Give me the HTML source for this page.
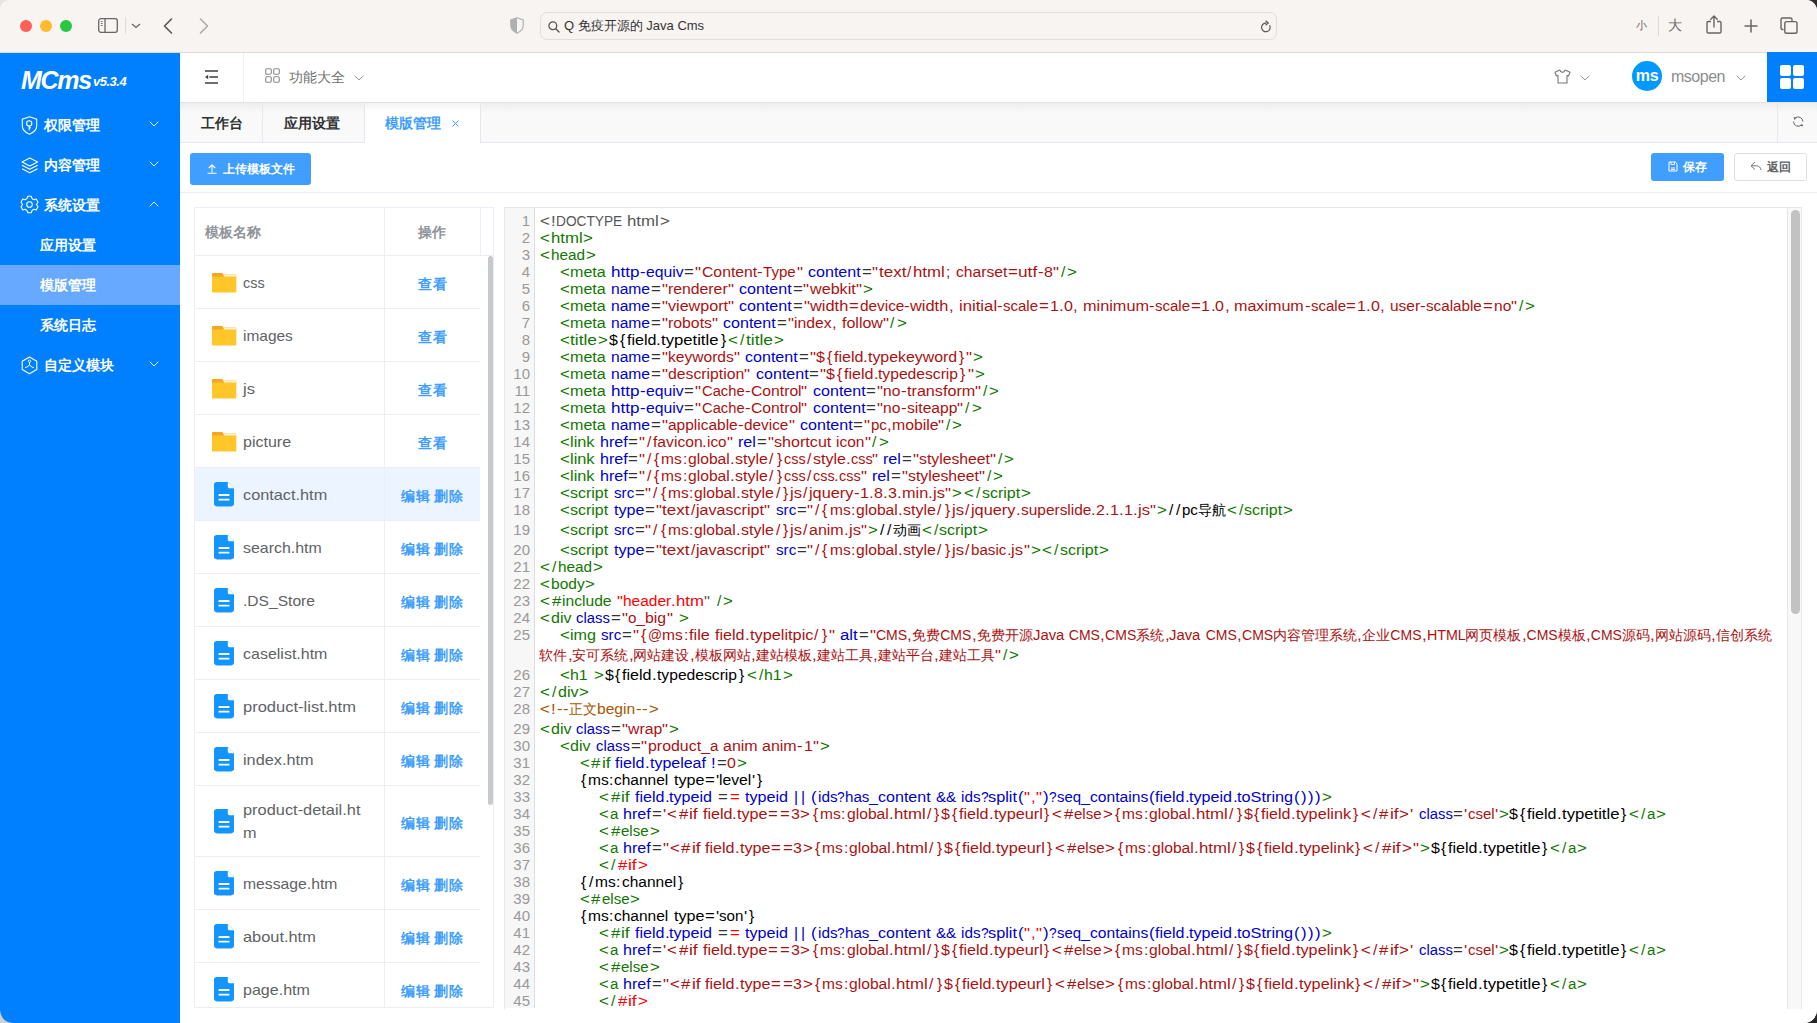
<!DOCTYPE html>
<html><head><meta charset="utf-8">
<style>
*{box-sizing:border-box;margin:0;padding:0}
html,body{width:1817px;height:1023px;overflow:hidden;background:#fff;font-family:"Liberation Sans",sans-serif}
.abs{position:absolute}
svg{position:absolute;overflow:visible}
#win{position:absolute;left:0;top:0;width:1817px;height:1023px;background:#fff;border-radius:10px 11px 13px 13px;overflow:hidden}
#chrome{position:absolute;left:0;top:0;width:1817px;height:53px;background:#f8f4f2;border-bottom:1px solid #dedad8}
.tl{position:absolute;top:20px;width:12px;height:12px;border-radius:50%}
#url{position:absolute;left:540px;top:12px;width:737px;height:28px;border:1px solid #e2dedc;border-radius:7px;background:#f8f4f2}
#side{position:absolute;left:0;top:53px;width:180px;height:970px;background:#007fff}
.mi{position:absolute;left:0;width:180px;height:40px;color:#fff;font-size:14px;font-weight:bold}
.mi .t{position:absolute;left:44px;top:11px;line-height:18px}
.mi.sub .t{left:40px}
#hdr{position:absolute;left:180px;top:53px;width:1637px;height:49px;background:#fff}
#tabs{position:absolute;left:180px;top:102px;width:1637px;height:41px;background:linear-gradient(#eeeeee,#f9f9f9 10px);border-top:1px solid #dfe2e8;border-bottom:1px solid #e4e7ed}
.tab{position:absolute;top:0;height:39px;font-size:14px;font-weight:bold;color:#303133;line-height:41px;border-right:1px solid #e4e7ed}
#main{position:absolute;left:180px;top:143px;width:1637px;height:880px;background:#fff}
.btn{position:absolute;border-radius:3px;font-size:12px;font-weight:bold}
#tbl{position:absolute;left:194px;top:207px;width:300px;height:801px;border:1px solid #ebeef5;overflow:hidden;background:#fff}
.tr{position:absolute;left:0;width:285px;border-bottom:1px solid #ebeef5}
.tr .cd{position:absolute;left:189px;top:0;bottom:0;border-left:1px solid #ebeef5}
.fn{position:absolute;left:48px;font-size:15px;color:#606266;line-height:23px}
.op{position:absolute;left:206px;font-size:13.5px;font-weight:bold;color:#409eff;line-height:18px;letter-spacing:0.5px}
#ed{position:absolute;left:504px;top:207px;width:1298px;height:802px;border:1px solid #e8e8e8;border-bottom:none;overflow:hidden;background:#fff}
#gut{position:absolute;left:0;top:0;width:30px;height:800px;background:#f7f7f7;border-right:1px solid #ddd}
.cl{position:absolute;left:0;height:17px;width:1290px;font-size:14px;line-height:17px;white-space:pre}
.cl .ln{position:absolute;left:0;top:-1.2px;width:25px;text-align:right;color:#999;font-size:15px}
.cl i{position:absolute;top:0;font-style:normal;transform-origin:0 0}
</style></head><body>
<div class="abs" style="left:0;top:0;width:20px;height:20px;background:#e6e6e6"></div><div class="abs" style="left:1797px;top:0;width:20px;height:20px;background:#2e2e2e"></div><div class="abs" style="left:0;top:1003px;width:20px;height:20px;background:#cfcfcf"></div><div class="abs" style="left:1797px;top:1003px;width:20px;height:20px;background:#262626"></div>
<div id="win">
 <div id="chrome">
  <div class="tl" style="left:20px;background:#fe5f57"></div>
  <div class="tl" style="left:40px;background:#febc2e"></div>
  <div class="tl" style="left:60px;background:#28c840"></div>
  <svg style="left:98px;top:18px" width="20" height="15" viewBox="0 0 20 15"><rect x="0.7" y="0.7" width="18.6" height="13.6" rx="2.2" fill="none" stroke="#666" stroke-width="1.3"/><path d="M7 0.7 L7 14.3" stroke="#666" stroke-width="1.3"/><path d="M2.8 3.5 L4.6 3.5 M2.8 5.5 L4.6 5.5 M2.8 7.5 L4.6 7.5" stroke="#666" stroke-width="0.9"/></svg>
<div class="abs" style="left:125px;top:17px;width:1px;height:17px;background:#dedad8"></div>
<svg style="left:131px;top:23px" width="10" height="6" viewBox="0 0 10 6"><path d="M1 1 L5 4.5 L9 1" fill="none" stroke="#666" stroke-width="1.3"/></svg>
<svg style="left:163px;top:18px" width="10" height="16" viewBox="0 0 10 16"><path d="M8.5 1 L1.5 8 L8.5 15" fill="none" stroke="#555" stroke-width="1.6" stroke-linecap="round" stroke-linejoin="round"/></svg>
<svg style="left:199px;top:18px" width="10" height="16" viewBox="0 0 10 16"><path d="M1.5 1 L8.5 8 L1.5 15" fill="none" stroke="#aaa" stroke-width="1.6" stroke-linecap="round" stroke-linejoin="round"/></svg>
<svg style="left:510px;top:17px" width="14" height="17" viewBox="0 0 14 17"><path d="M7 0.8 L13.2 3 L13.2 8.5 C13.2 12.2 10.4 14.6 7 16.2 C3.6 14.6 0.8 12.2 0.8 8.5 L0.8 3 Z" fill="none" stroke="#b0b0b0" stroke-width="1.2"/><path d="M7 0.8 L0.8 3 L0.8 8.5 C0.8 12.2 3.6 14.6 7 16.2 Z" fill="#b0b0b0"/></svg>
<div class="abs" style="left:1636px;top:18px;font-size:10.5px;line-height:14px;color:#666">小</div>
<div class="abs" style="left:1658px;top:16px;width:1px;height:20px;background:#dedad8"></div>
<div class="abs" style="left:1668px;top:16px;font-size:14px;line-height:18px;color:#666">大</div>
<svg style="left:1706px;top:15px" width="16" height="19" viewBox="0 0 16 19"><path d="M5 6.5 L2.2 6.5 C1.5 6.5 1 7 1 7.7 L1 16.8 C1 17.5 1.5 18 2.2 18 L13.8 18 C14.5 18 15 17.5 15 16.8 L15 7.7 C15 7 14.5 6.5 13.8 6.5 L11 6.5" fill="none" stroke="#666" stroke-width="1.4"/><path d="M8 12 L8 1.2 M4.8 4.2 L8 1 L11.2 4.2" fill="none" stroke="#666" stroke-width="1.4" stroke-linecap="round" stroke-linejoin="round"/></svg>
<svg style="left:1744px;top:19px" width="14" height="14" viewBox="0 0 14 14"><path d="M7 0.5 L7 13.5 M0.5 7 L13.5 7" stroke="#666" stroke-width="1.5"/></svg>
<svg style="left:1780px;top:17px" width="18" height="17" viewBox="0 0 18 17"><path d="M3.5 12.5 L2.5 12.5 C1.5 12.5 1 12 1 11 L1 2.5 C1 1.5 1.5 1 2.5 1 L10.5 1 C11.5 1 12 1.5 12 2.5 L12 4" fill="none" stroke="#666" stroke-width="1.4"/><rect x="4.8" y="4.6" width="12.2" height="11.6" rx="1.8" fill="none" stroke="#666" stroke-width="1.4"/></svg>

  <div id="url">
   <svg style="left:7px;top:8px" width="12" height="12" viewBox="0 0 12 12"><circle cx="4.8" cy="4.8" r="3.9" fill="none" stroke="#555" stroke-width="1.3"/><path d="M7.6 7.6 L11 11" stroke="#555" stroke-width="1.4" stroke-linecap="round"/></svg>
   <div class="abs" style="left:23px;top:5px;font-size:13px;line-height:16px;color:#333">Q 免疫开源的 Java Cms</div>
   <svg style="left:719px;top:7px" width="12" height="13" viewBox="0 0 12 13"><path d="M9.6 5.2 A4.3 4.3 0 1 1 6.5 3.1" fill="none" stroke="#555" stroke-width="1.2"/><path d="M5.6 0.8 L8.2 3.1 L5.6 5.2" fill="none" stroke="#555" stroke-width="1.2"/></svg>
  </div>
 </div>
 <div id="side">
  <div class="abs" style="left:21px;top:12.5px;color:#fff;font-style:italic;font-weight:bold;font-size:25px;line-height:28px;letter-spacing:-1.3px">MCms</div>
<div class="abs" style="left:93px;top:21px;color:#fff;font-style:italic;font-weight:bold;font-size:13px;line-height:16px;letter-spacing:-0.5px">v5.3.4</div>
<svg style="left:21px;top:63px" width="17" height="19" viewBox="0 0 17 19"><path d="M8.5 0.8 L15.7 3.2 L15.7 10 C15.7 13.8 12.5 16.5 8.5 18.2 C4.5 16.5 1.3 13.8 1.3 10 L1.3 3.2 Z" fill="none" stroke="#fff" stroke-width="1.1"/><circle cx="8.2" cy="7.4" r="2.6" fill="none" stroke="#fff" stroke-width="1.1"/><path d="M8.2 10 L8.2 14.2 M8.2 11.8 L10 11.8" stroke="#fff" stroke-width="1.1"/></svg>
<svg style="left:21px;top:104px" width="18" height="17" viewBox="0 0 18 17"><path d="M8.8 1 L16.6 5 L8.8 9 L1 5 Z" fill="none" stroke="#fff" stroke-width="1.1" stroke-linejoin="round"/><path d="M1 8.2 L8.8 12.2 L16.6 8.2" fill="none" stroke="#fff" stroke-width="1.1" stroke-linejoin="round"/><path d="M1 11.8 L8.8 15.8 L16.6 11.8" fill="none" stroke="#fff" stroke-width="1.1" stroke-linejoin="round"/></svg>
<svg style="left:20px;top:142px" width="19" height="19" viewBox="0 0 19 19"><path d="M7.6 1.3 L11.4 1.3 L12 3.6 L13.9 4.7 L16.2 4 L18 7.3 L16.4 9.5 L18 11.7 L16.2 15 L13.9 14.3 L12 15.4 L11.4 17.7 L7.6 17.7 L7 15.4 L5.1 14.3 L2.8 15 L1 11.7 L2.6 9.5 L1 7.3 L2.8 4 L5.1 4.7 L7 3.6 Z" fill="none" stroke="#fff" stroke-width="1.1" stroke-linejoin="round"/><circle cx="9.5" cy="9.5" r="2.8" fill="none" stroke="#fff" stroke-width="1.1"/></svg>
<svg style="left:21px;top:303px" width="17" height="19" viewBox="0 0 17 19"><path d="M8.5 1 L15.8 5.2 L15.8 13.6 L8.5 17.8 L1.2 13.6 L1.2 5.2 Z" fill="none" stroke="#fff" stroke-width="1.1" stroke-linejoin="round"/><circle cx="8.5" cy="5.2" r="1.2" fill="none" stroke="#fff" stroke-width="0.9"/><path d="M8.5 6.4 L8.5 9 M8.5 9 L5.8 11.2 M8.5 9 L11.2 11.2 M4 11.5 L5.8 11.2 M13 11.5 L11.2 11.2" stroke="#fff" stroke-width="1" fill="none"/></svg>
<div class="mi" style="top:52px"><span class="t">权限管理</span></div>
<div class="mi" style="top:92px"><span class="t">内容管理</span></div>
<div class="mi" style="top:132px"><span class="t">系统设置</span></div>
<div class="mi sub" style="top:172px"><span class="t">应用设置</span></div>
<div class="abs" style="left:0;top:212px;width:180px;height:40px;background:#66a9ff"></div>
<div class="mi sub" style="top:212px"><span class="t">模版管理</span></div>
<div class="mi sub" style="top:252px"><span class="t">系统日志</span></div>
<div class="mi" style="top:292px"><span class="t">自定义模块</span></div>
<svg style="left:149px;top:68px" width="10" height="6" viewBox="0 0 10 6"><path d="M0.7 0.7 L5 5 L9.3 0.7" fill="none" stroke="#fff" stroke-width="1" opacity="0.9"/></svg>
<svg style="left:149px;top:108px" width="10" height="6" viewBox="0 0 10 6"><path d="M0.7 0.7 L5 5 L9.3 0.7" fill="none" stroke="#fff" stroke-width="1" opacity="0.9"/></svg>
<svg style="left:149px;top:148px" width="10" height="6" viewBox="0 0 10 6"><path d="M0.7 5.3 L5 1 L9.3 5.3" fill="none" stroke="#fff" stroke-width="1" opacity="0.9"/></svg>
<svg style="left:149px;top:308px" width="10" height="6" viewBox="0 0 10 6"><path d="M0.7 0.7 L5 5 L9.3 0.7" fill="none" stroke="#fff" stroke-width="1" opacity="0.9"/></svg>

 </div>
 <div id="hdr">
  <svg style="left:0;top:0" width="60" height="49" viewBox="0 0 60 49"><path d="M25 18 L38 18 M29.4 24 L38 24 M25 30 L38 30" stroke="#6e6e6e" stroke-width="2"/><path d="M25 24 L28.2 21.8 L28.2 26.2 Z" fill="#444"/></svg>
<div class="abs" style="left:63px;top:0;width:1px;height:49px;background:#eceef2"></div>
<svg style="left:85px;top:15.3px" width="15" height="15" viewBox="0 0 15 15"><rect x="0.7" y="0.7" width="5.6" height="5.6" rx="1.2" fill="none" stroke="#8a8a8a" stroke-width="1.1"/><rect x="8.7" y="0.7" width="5.6" height="5.6" rx="1.2" fill="none" stroke="#8a8a8a" stroke-width="1.1"/><rect x="0.7" y="8.7" width="5.6" height="5.6" rx="1.2" fill="none" stroke="#8a8a8a" stroke-width="1.1"/><rect x="8.7" y="8.7" width="5.6" height="5.6" rx="1.2" fill="none" stroke="#8a8a8a" stroke-width="1.1"/></svg>
<div class="abs" style="left:109px;top:15px;font-size:14px;line-height:18px;color:#707070">功能大全</div>
<svg style="left:174px;top:22px" width="10" height="6" viewBox="0 0 10 6"><path d="M0.7 0.7 L5 5 L9.3 0.7" fill="none" stroke="#999" stroke-width="1"/></svg>
<svg style="left:1374px;top:16px" width="17" height="15" viewBox="0 0 17 15"><path d="M5.8 1 L1 3.3 L2.4 7 L4 6.4 L4 14 L13 14 L13 6.4 L14.6 7 L16 3.3 L11.2 1 C10.6 2.6 9.7 3.4 8.5 3.4 C7.3 3.4 6.4 2.6 5.8 1 Z" fill="none" stroke="#777" stroke-width="1.1" stroke-linejoin="round"/></svg>
<svg style="left:1400px;top:22px" width="10" height="6" viewBox="0 0 10 6"><path d="M0.7 0.7 L5 5 L9.3 0.7" fill="none" stroke="#999" stroke-width="1"/></svg>
<div class="abs" style="left:1452px;top:8px;width:30px;height:30px;border-radius:50%;background:#0099ff;color:#fff;font-size:16px;font-weight:bold;line-height:29px;text-align:center;letter-spacing:-0.3px">ms</div>
<div class="abs" style="left:1491px;top:14px;font-size:16px;line-height:19px;color:#8c8c8c;letter-spacing:-0.5px">msopen</div>
<svg style="left:1556px;top:22px" width="10" height="6" viewBox="0 0 10 6"><path d="M0.7 0.7 L5 5 L9.3 0.7" fill="none" stroke="#999" stroke-width="1"/></svg>
<div class="abs" style="left:1587px;top:-1px;width:50px;height:50px;background:#007fff"></div>
<svg style="left:1600px;top:12px" width="24" height="24" viewBox="0 0 24 24"><rect x="0" y="0" width="11" height="11" rx="2" fill="#fff"/><rect x="13" y="0" width="11" height="11" rx="2" fill="#fff"/><rect x="0" y="13" width="11" height="11" rx="2" fill="#fff"/><rect x="13" y="13" width="11" height="11" rx="2" fill="#fff"/></svg>

 </div>
 <div id="tabs">
  <div class="tab" style="left:0;width:83px;padding-left:21px">工作台</div>
  <div class="tab" style="left:83px;width:102px;padding-left:20.5px">应用设置</div>
  <div class="tab" style="left:185px;width:116px;padding-left:20px;background:linear-gradient(#f3f3f3,#fff 9px);color:#409eff;height:42px;top:-1px;line-height:41px;border-top:1px solid #dfe2e8">模版管理<svg style="left:87px;top:17px" width="7" height="7" viewBox="0 0 7 7"><path d="M0.5 0.5 L6.5 6.5 M6.5 0.5 L0.5 6.5" stroke="#409eff" stroke-width="1"/></svg></div>
  <div class="abs" style="left:1597px;top:0;width:1px;height:40px;background:#e4e7ed"></div>
  <svg style="left:1613px;top:13px" width="12" height="12" viewBox="0 0 12 12"><path d="M2.1 2.1 A4.7 4.7 0 0 1 9.9 5.6" fill="none" stroke="#666" stroke-width="1"/><path d="M0.5 1.3 L3.6 1.6 L1.6 3.9 Z" fill="#666"/><path d="M0.5 5.6 A4.7 4.7 0 0 0 8.5 8.9" fill="none" stroke="#666" stroke-width="1"/><path d="M10.2 10.3 L7.1 10 L9.1 7.7 Z" fill="#666"/></svg>
 </div>
 <div id="main">
  <div class="btn" style="left:10px;top:10px;width:121px;height:32px;background:#409eff;color:#fff;line-height:32px;padding-left:33px">上传模板文件</div>
  <svg style="left:27px;top:20px" width="10" height="11" viewBox="0 0 10 11"><path d="M5 9.5 L5 2 M1.8 5 L5 1.8 L8.2 5 M0.5 10.3 L9.5 10.3" fill="none" stroke="#fff" stroke-width="1.1"/></svg>
<div class="btn" style="left:1471px;top:10px;width:73px;height:28px;background:#409eff;color:#fff;line-height:28px;padding-left:32px;font-size:12px">保存</div>
<svg style="left:1488px;top:18px" width="10" height="11" viewBox="0 0 10 11"><path d="M1 1 L7.2 1 L9 2.8 L9 10 L1 10 Z" fill="none" stroke="#fff" stroke-width="1"/><path d="M3 1 L3 3.5 L6.5 3.5 L6.5 1 M3 7 L7 7 M3 8.6 L7 8.6" fill="none" stroke="#fff" stroke-width="0.9"/></svg>
<div class="btn" style="left:1554px;top:10px;width:73px;height:28px;background:#fff;border:1px solid #dcdfe6;color:#606266;line-height:26px;padding-left:32px;font-size:12px;font-weight:bold">返回</div>
<svg style="left:1570px;top:18px" width="12" height="10" viewBox="0 0 12 10"><path d="M5 1 L1 4.8 L5 8.5 M1.2 4.8 L6.5 4.8 C9 4.8 10.8 6.5 11 9" fill="none" stroke="#777" stroke-width="1"/></svg>

  <div class="abs" style="left:0;top:49px;width:1637px;height:1px;background:#ebeef5"></div>
 </div>
 <div id="tbl">
  <div class="tr" style="top:0;height:48px;width:298px"><div class="cd"></div><div class="abs" style="left:285px;top:0;bottom:0;border-left:1px solid #ebeef5"></div><div class="abs" style="left:10px;top:15px;font-size:14px;line-height:18px;font-weight:bold;color:#909399">模板名称</div><div class="abs" style="left:223px;top:15px;font-size:14px;line-height:18px;font-weight:bold;color:#909399">操作</div></div>
<div class="tr" style="top:48px;height:53px;"><div class="cd"></div><svg style="left:17px;top:17px" width="25" height="20" viewBox="0 0 25 20"><path d="M0 1.2 C0 0.5 0.5 0 1.2 0 L10.2 0 L11.6 1.6 L23.2 1.6 C23.9 1.6 24.3 2 24.3 2.6 L24.3 4 L0 4 Z" fill="#f5a623"/><path d="M11 1.6 L23.2 1.6 C23.9 1.6 24.3 2 24.3 2.6 L24.3 4 L12.5 4 Z" fill="#fff3d3"/><path d="M0 3.4 L24.3 3.4 L24.3 18.6 C24.3 19.3 23.9 19.6 23.2 19.6 L1.1 19.6 C0.4 19.6 0 19.3 0 18.6 Z" fill="#ffc629"/></svg><div class="op" style="top:20px;left:223px">查看</div><div class="fn" style="top:15px"><span style="display:inline-block;transform:scaleX(0.959);transform-origin:0 0">css</span></div></div>
<div class="tr" style="top:101px;height:53px;"><div class="cd"></div><svg style="left:17px;top:17px" width="25" height="20" viewBox="0 0 25 20"><path d="M0 1.2 C0 0.5 0.5 0 1.2 0 L10.2 0 L11.6 1.6 L23.2 1.6 C23.9 1.6 24.3 2 24.3 2.6 L24.3 4 L0 4 Z" fill="#f5a623"/><path d="M11 1.6 L23.2 1.6 C23.9 1.6 24.3 2 24.3 2.6 L24.3 4 L12.5 4 Z" fill="#fff3d3"/><path d="M0 3.4 L24.3 3.4 L24.3 18.6 C24.3 19.3 23.9 19.6 23.2 19.6 L1.1 19.6 C0.4 19.6 0 19.3 0 18.6 Z" fill="#ffc629"/></svg><div class="op" style="top:20px;left:223px">查看</div><div class="fn" style="top:15px"><span style="display:inline-block;transform:scaleX(1.031);transform-origin:0 0">images</span></div></div>
<div class="tr" style="top:154px;height:53px;"><div class="cd"></div><svg style="left:17px;top:17px" width="25" height="20" viewBox="0 0 25 20"><path d="M0 1.2 C0 0.5 0.5 0 1.2 0 L10.2 0 L11.6 1.6 L23.2 1.6 C23.9 1.6 24.3 2 24.3 2.6 L24.3 4 L0 4 Z" fill="#f5a623"/><path d="M11 1.6 L23.2 1.6 C23.9 1.6 24.3 2 24.3 2.6 L24.3 4 L12.5 4 Z" fill="#fff3d3"/><path d="M0 3.4 L24.3 3.4 L24.3 18.6 C24.3 19.3 23.9 19.6 23.2 19.6 L1.1 19.6 C0.4 19.6 0 19.3 0 18.6 Z" fill="#ffc629"/></svg><div class="op" style="top:20px;left:223px">查看</div><div class="fn" style="top:15px"><span style="display:inline-block;transform:scaleX(1.105);transform-origin:0 0">js</span></div></div>
<div class="tr" style="top:207px;height:53px;"><div class="cd"></div><svg style="left:17px;top:17px" width="25" height="20" viewBox="0 0 25 20"><path d="M0 1.2 C0 0.5 0.5 0 1.2 0 L10.2 0 L11.6 1.6 L23.2 1.6 C23.9 1.6 24.3 2 24.3 2.6 L24.3 4 L0 4 Z" fill="#f5a623"/><path d="M11 1.6 L23.2 1.6 C23.9 1.6 24.3 2 24.3 2.6 L24.3 4 L12.5 4 Z" fill="#fff3d3"/><path d="M0 3.4 L24.3 3.4 L24.3 18.6 C24.3 19.3 23.9 19.6 23.2 19.6 L1.1 19.6 C0.4 19.6 0 19.3 0 18.6 Z" fill="#ffc629"/></svg><div class="op" style="top:20px;left:223px">查看</div><div class="fn" style="top:15px"><span style="display:inline-block;transform:scaleX(1.069);transform-origin:0 0">picture</span></div></div>
<div class="tr" style="top:260px;height:53px;background:#ecf5ff;"><div class="cd"></div><svg style="left:19px;top:14px" width="20" height="25" viewBox="0 0 20 25"><path d="M3 0 L13.8 0 L20 6.2 L20 21.6 C20 23.4 19 24.4 17 24.4 L3 24.4 C1 24.4 0 23.4 0 21.6 L0 2.8 C0 1 1 0 3 0 Z" fill="#1295ff"/><path d="M13.8 0 L13.8 4.4 C13.8 5.6 14.5 6.2 15.6 6.2 L20 6.2 Z" fill="#fff"/><path d="M4.6 13 L15.4 13 M4.6 17.6 L15.4 17.6" stroke="#fff" stroke-width="1.8"/></svg><div class="op" style="top:20px;left:206px">编辑 删除</div><div class="fn" style="top:15px"><span style="display:inline-block;transform:scaleX(1.086);transform-origin:0 0">contact.htm</span></div></div>
<div class="tr" style="top:313px;height:53px;"><div class="cd"></div><svg style="left:19px;top:14px" width="20" height="25" viewBox="0 0 20 25"><path d="M3 0 L13.8 0 L20 6.2 L20 21.6 C20 23.4 19 24.4 17 24.4 L3 24.4 C1 24.4 0 23.4 0 21.6 L0 2.8 C0 1 1 0 3 0 Z" fill="#1295ff"/><path d="M13.8 0 L13.8 4.4 C13.8 5.6 14.5 6.2 15.6 6.2 L20 6.2 Z" fill="#fff"/><path d="M4.6 13 L15.4 13 M4.6 17.6 L15.4 17.6" stroke="#fff" stroke-width="1.8"/></svg><div class="op" style="top:20px;left:206px">编辑 删除</div><div class="fn" style="top:15px"><span style="display:inline-block;transform:scaleX(1.061);transform-origin:0 0">search.htm</span></div></div>
<div class="tr" style="top:366px;height:53px;"><div class="cd"></div><svg style="left:19px;top:14px" width="20" height="25" viewBox="0 0 20 25"><path d="M3 0 L13.8 0 L20 6.2 L20 21.6 C20 23.4 19 24.4 17 24.4 L3 24.4 C1 24.4 0 23.4 0 21.6 L0 2.8 C0 1 1 0 3 0 Z" fill="#1295ff"/><path d="M13.8 0 L13.8 4.4 C13.8 5.6 14.5 6.2 15.6 6.2 L20 6.2 Z" fill="#fff"/><path d="M4.6 13 L15.4 13 M4.6 17.6 L15.4 17.6" stroke="#fff" stroke-width="1.8"/></svg><div class="op" style="top:20px;left:206px">编辑 删除</div><div class="fn" style="top:15px"><span style="display:inline-block;transform:scaleX(1.040);transform-origin:0 0">.DS_Store</span></div></div>
<div class="tr" style="top:419px;height:53px;"><div class="cd"></div><svg style="left:19px;top:14px" width="20" height="25" viewBox="0 0 20 25"><path d="M3 0 L13.8 0 L20 6.2 L20 21.6 C20 23.4 19 24.4 17 24.4 L3 24.4 C1 24.4 0 23.4 0 21.6 L0 2.8 C0 1 1 0 3 0 Z" fill="#1295ff"/><path d="M13.8 0 L13.8 4.4 C13.8 5.6 14.5 6.2 15.6 6.2 L20 6.2 Z" fill="#fff"/><path d="M4.6 13 L15.4 13 M4.6 17.6 L15.4 17.6" stroke="#fff" stroke-width="1.8"/></svg><div class="op" style="top:20px;left:206px">编辑 删除</div><div class="fn" style="top:15px"><span style="display:inline-block;transform:scaleX(1.066);transform-origin:0 0">caselist.htm</span></div></div>
<div class="tr" style="top:472px;height:53px;"><div class="cd"></div><svg style="left:19px;top:14px" width="20" height="25" viewBox="0 0 20 25"><path d="M3 0 L13.8 0 L20 6.2 L20 21.6 C20 23.4 19 24.4 17 24.4 L3 24.4 C1 24.4 0 23.4 0 21.6 L0 2.8 C0 1 1 0 3 0 Z" fill="#1295ff"/><path d="M13.8 0 L13.8 4.4 C13.8 5.6 14.5 6.2 15.6 6.2 L20 6.2 Z" fill="#fff"/><path d="M4.6 13 L15.4 13 M4.6 17.6 L15.4 17.6" stroke="#fff" stroke-width="1.8"/></svg><div class="op" style="top:20px;left:206px">编辑 删除</div><div class="fn" style="top:15px"><span style="display:inline-block;transform:scaleX(1.101);transform-origin:0 0">product-list.htm</span></div></div>
<div class="tr" style="top:525px;height:53px;"><div class="cd"></div><svg style="left:19px;top:14px" width="20" height="25" viewBox="0 0 20 25"><path d="M3 0 L13.8 0 L20 6.2 L20 21.6 C20 23.4 19 24.4 17 24.4 L3 24.4 C1 24.4 0 23.4 0 21.6 L0 2.8 C0 1 1 0 3 0 Z" fill="#1295ff"/><path d="M13.8 0 L13.8 4.4 C13.8 5.6 14.5 6.2 15.6 6.2 L20 6.2 Z" fill="#fff"/><path d="M4.6 13 L15.4 13 M4.6 17.6 L15.4 17.6" stroke="#fff" stroke-width="1.8"/></svg><div class="op" style="top:20px;left:206px">编辑 删除</div><div class="fn" style="top:15px"><span style="display:inline-block;transform:scaleX(1.085);transform-origin:0 0">index.htm</span></div></div>
<div class="tr" style="top:578px;height:71px;"><div class="cd"></div><svg style="left:19px;top:23px" width="20" height="25" viewBox="0 0 20 25"><path d="M3 0 L13.8 0 L20 6.2 L20 21.6 C20 23.4 19 24.4 17 24.4 L3 24.4 C1 24.4 0 23.4 0 21.6 L0 2.8 C0 1 1 0 3 0 Z" fill="#1295ff"/><path d="M13.8 0 L13.8 4.4 C13.8 5.6 14.5 6.2 15.6 6.2 L20 6.2 Z" fill="#fff"/><path d="M4.6 13 L15.4 13 M4.6 17.6 L15.4 17.6" stroke="#fff" stroke-width="1.8"/></svg><div class="op" style="top:29px;left:206px">编辑 删除</div><div class="fn" style="top:12px"><span style="display:inline-block;transform:scaleX(1.092);transform-origin:0 0">product-detail.ht</span><br><span style="display:inline-block;transform:scaleX(1.084);transform-origin:0 0">m</span></div></div>
<div class="tr" style="top:649px;height:53px;"><div class="cd"></div><svg style="left:19px;top:14px" width="20" height="25" viewBox="0 0 20 25"><path d="M3 0 L13.8 0 L20 6.2 L20 21.6 C20 23.4 19 24.4 17 24.4 L3 24.4 C1 24.4 0 23.4 0 21.6 L0 2.8 C0 1 1 0 3 0 Z" fill="#1295ff"/><path d="M13.8 0 L13.8 4.4 C13.8 5.6 14.5 6.2 15.6 6.2 L20 6.2 Z" fill="#fff"/><path d="M4.6 13 L15.4 13 M4.6 17.6 L15.4 17.6" stroke="#fff" stroke-width="1.8"/></svg><div class="op" style="top:20px;left:206px">编辑 删除</div><div class="fn" style="top:15px"><span style="display:inline-block;transform:scaleX(1.049);transform-origin:0 0">message.htm</span></div></div>
<div class="tr" style="top:702px;height:53px;"><div class="cd"></div><svg style="left:19px;top:14px" width="20" height="25" viewBox="0 0 20 25"><path d="M3 0 L13.8 0 L20 6.2 L20 21.6 C20 23.4 19 24.4 17 24.4 L3 24.4 C1 24.4 0 23.4 0 21.6 L0 2.8 C0 1 1 0 3 0 Z" fill="#1295ff"/><path d="M13.8 0 L13.8 4.4 C13.8 5.6 14.5 6.2 15.6 6.2 L20 6.2 Z" fill="#fff"/><path d="M4.6 13 L15.4 13 M4.6 17.6 L15.4 17.6" stroke="#fff" stroke-width="1.8"/></svg><div class="op" style="top:20px;left:206px">编辑 删除</div><div class="fn" style="top:15px"><span style="display:inline-block;transform:scaleX(1.091);transform-origin:0 0">about.htm</span></div></div>
<div class="tr" style="top:755px;height:53px;"><div class="cd"></div><svg style="left:19px;top:14px" width="20" height="25" viewBox="0 0 20 25"><path d="M3 0 L13.8 0 L20 6.2 L20 21.6 C20 23.4 19 24.4 17 24.4 L3 24.4 C1 24.4 0 23.4 0 21.6 L0 2.8 C0 1 1 0 3 0 Z" fill="#1295ff"/><path d="M13.8 0 L13.8 4.4 C13.8 5.6 14.5 6.2 15.6 6.2 L20 6.2 Z" fill="#fff"/><path d="M4.6 13 L15.4 13 M4.6 17.6 L15.4 17.6" stroke="#fff" stroke-width="1.8"/></svg><div class="op" style="top:20px;left:206px">编辑 删除</div><div class="fn" style="top:15px"><span style="display:inline-block;transform:scaleX(1.070);transform-origin:0 0">page.htm</span></div></div>
<div class="abs" style="left:293px;top:48px;width:5px;height:549px;border-radius:3px;background:#c8c9cc"></div>
 </div>
 <div id="ed">
  <div id="gut"></div>
  <div class="abs" style="left:1282px;top:0;width:14px;height:802px;background:#f8f8f8;border-left:1px solid #e6e6e6"></div>
  <div class="abs" style="left:1286px;top:2px;width:9px;height:404px;border-radius:5px;background:#c2c2c2"></div>
  <div class="cl" style="top:5.25px"><span class="ln">1</span><i style="left:35.12px;color:#555;transform:scaleX(1.200)">&lt;</i><i style="left:46.18px;color:#555;transform:scaleX(1.200)">!</i><i style="left:51.27px;color:#555;transform:scaleX(0.978)">DOCTYPE</i><i style="left:122.37px;color:#555;transform:scaleX(1.199)">html</i><i style="left:154.91px;color:#555;transform:scaleX(1.200)">&gt;</i></div>
<div class="cl" style="top:22.25px"><span class="ln">2</span><i style="left:35.12px;color:#170;transform:scaleX(1.200)">&lt;</i><i style="left:45.76px;color:#170;transform:scaleX(1.199)">html</i><i style="left:78.30px;color:#170;transform:scaleX(1.200)">&gt;</i></div>
<div class="cl" style="top:39.25px"><span class="ln">3</span><i style="left:35.12px;color:#170;transform:scaleX(1.200)">&lt;</i><i style="left:45.76px;color:#170;transform:scaleX(1.096)">head</i><i style="left:80.71px;color:#170;transform:scaleX(1.200)">&gt;</i></div>
<div class="cl" style="top:56.25px"><span class="ln">4</span><i style="left:54.81px;color:#170;transform:scaleX(1.200)">&lt;</i><i style="left:65.44px;color:#170;transform:scaleX(1.148)">meta</i><i style="left:106.11px;color:#00c;transform:scaleX(1.219)">http</i><i style="left:135.01px;color:#00c;transform:scaleX(1.200)">-</i><i style="left:141.04px;color:#00c;transform:scaleX(1.124)">equiv</i><i style="left:179.48px;color:#333;transform:scaleX(1.200)">=</i><i style="left:190.34px;color:#a11;transform:scaleX(1.200)">&quot;</i><i style="left:196.54px;color:#a11;transform:scaleX(1.125)">Content</i><i style="left:252.13px;color:#a11;transform:scaleX(1.200)">-</i><i style="left:258.16px;color:#a11;transform:scaleX(1.077)">Type</i><i style="left:291.90px;color:#a11;transform:scaleX(1.200)">&quot;</i><i style="left:303.02px;color:#00c;transform:scaleX(1.147)">content</i><i style="left:356.51px;color:#333;transform:scaleX(1.200)">=</i><i style="left:367.37px;color:#a11;transform:scaleX(1.200)">&quot;</i><i style="left:373.57px;color:#a11;transform:scaleX(1.212)">text</i><i style="left:402.26px;color:#a11;transform:scaleX(1.120)">/</i><i style="left:407.95px;color:#a11;transform:scaleX(1.199)">html</i><i style="left:440.60px;color:#a11;transform:scaleX(1.120)">;</i><i style="left:450.81px;color:#a11;transform:scaleX(1.116)">charset</i><i style="left:502.86px;color:#a11;transform:scaleX(1.200)">=</i><i style="left:513.49px;color:#a11;transform:scaleX(1.232)">utf</i><i style="left:533.11px;color:#a11;transform:scaleX(1.200)">-</i><i style="left:539.14px;color:#a11;transform:scaleX(1.143)">8</i><i style="left:548.27px;color:#a11;transform:scaleX(1.200)">&quot;</i><i style="left:555.80px;color:#170;transform:scaleX(1.120)">/</i><i style="left:562.32px;color:#170;transform:scaleX(1.200)">&gt;</i></div>
<div class="cl" style="top:73.25px"><span class="ln">5</span><i style="left:54.81px;color:#170;transform:scaleX(1.200)">&lt;</i><i style="left:65.44px;color:#170;transform:scaleX(1.148)">meta</i><i style="left:106.11px;color:#00c;transform:scaleX(1.115)">name</i><i style="left:145.99px;color:#333;transform:scaleX(1.200)">=</i><i style="left:156.85px;color:#a11;transform:scaleX(1.200)">&quot;</i><i style="left:163.05px;color:#a11;transform:scaleX(1.127)">renderer</i><i style="left:222.92px;color:#a11;transform:scaleX(1.200)">&quot;</i><i style="left:234.04px;color:#00c;transform:scaleX(1.147)">content</i><i style="left:287.53px;color:#333;transform:scaleX(1.200)">=</i><i style="left:298.39px;color:#a11;transform:scaleX(1.200)">&quot;</i><i style="left:304.59px;color:#a11;transform:scaleX(1.153)">webkit</i><i style="left:350.58px;color:#a11;transform:scaleX(1.200)">&quot;</i><i style="left:357.59px;color:#170;transform:scaleX(1.200)">&gt;</i></div>
<div class="cl" style="top:90.25px"><span class="ln">6</span><i style="left:54.81px;color:#170;transform:scaleX(1.200)">&lt;</i><i style="left:65.44px;color:#170;transform:scaleX(1.148)">meta</i><i style="left:106.11px;color:#00c;transform:scaleX(1.115)">name</i><i style="left:145.99px;color:#333;transform:scaleX(1.200)">=</i><i style="left:156.85px;color:#a11;transform:scaleX(1.200)">&quot;</i><i style="left:163.05px;color:#a11;transform:scaleX(1.151)">viewport</i><i style="left:223.26px;color:#a11;transform:scaleX(1.200)">&quot;</i><i style="left:234.38px;color:#00c;transform:scaleX(1.147)">content</i><i style="left:287.87px;color:#333;transform:scaleX(1.200)">=</i><i style="left:298.73px;color:#a11;transform:scaleX(1.200)">&quot;</i><i style="left:304.93px;color:#a11;transform:scaleX(1.170)">width</i><i style="left:343.99px;color:#a11;transform:scaleX(1.200)">=</i><i style="left:354.63px;color:#a11;transform:scaleX(1.096)">device</i><i style="left:399.43px;color:#a11;transform:scaleX(1.200)">-</i><i style="left:405.46px;color:#a11;transform:scaleX(1.170)">width</i><i style="left:443.91px;color:#a11;transform:scaleX(1.200)">,</i><i style="left:453.71px;color:#a11;transform:scaleX(1.194)">initial</i><i style="left:492.24px;color:#a11;transform:scaleX(1.200)">-</i><i style="left:498.28px;color:#a11;transform:scaleX(1.070)">scale</i><i style="left:534.06px;color:#a11;transform:scaleX(1.200)">=</i><i style="left:544.69px;color:#a11;transform:scaleX(1.143)">1</i><i style="left:553.80px;color:#a11;transform:scaleX(1.200)">.</i><i style="left:558.68px;color:#a11;transform:scaleX(1.143)">0</i><i style="left:567.80px;color:#a11;transform:scaleX(1.200)">,</i><i style="left:577.60px;color:#a11;transform:scaleX(1.162)">minimum</i><i style="left:644.00px;color:#a11;transform:scaleX(1.200)">-</i><i style="left:650.03px;color:#a11;transform:scaleX(1.070)">scale</i><i style="left:685.82px;color:#a11;transform:scaleX(1.200)">=</i><i style="left:696.45px;color:#a11;transform:scaleX(1.143)">1</i><i style="left:705.56px;color:#a11;transform:scaleX(1.200)">.</i><i style="left:710.44px;color:#a11;transform:scaleX(1.143)">0</i><i style="left:719.56px;color:#a11;transform:scaleX(1.200)">,</i><i style="left:729.36px;color:#a11;transform:scaleX(1.150)">maximum</i><i style="left:799.55px;color:#a11;transform:scaleX(1.200)">-</i><i style="left:805.59px;color:#a11;transform:scaleX(1.070)">scale</i><i style="left:841.37px;color:#a11;transform:scaleX(1.200)">=</i><i style="left:852.00px;color:#a11;transform:scaleX(1.143)">1</i><i style="left:861.11px;color:#a11;transform:scaleX(1.200)">.</i><i style="left:865.99px;color:#a11;transform:scaleX(1.143)">0</i><i style="left:875.11px;color:#a11;transform:scaleX(1.200)">,</i><i style="left:884.91px;color:#a11;transform:scaleX(1.103)">user</i><i style="left:915.38px;color:#a11;transform:scaleX(1.200)">-</i><i style="left:921.41px;color:#a11;transform:scaleX(1.087)">scalable</i><i style="left:978.06px;color:#a11;transform:scaleX(1.200)">=</i><i style="left:988.69px;color:#a11;transform:scaleX(1.108)">no</i><i style="left:1006.18px;color:#a11;transform:scaleX(1.200)">&quot;</i><i style="left:1013.71px;color:#170;transform:scaleX(1.120)">/</i><i style="left:1020.23px;color:#170;transform:scaleX(1.200)">&gt;</i></div>
<div class="cl" style="top:107.25px"><span class="ln">7</span><i style="left:54.81px;color:#170;transform:scaleX(1.200)">&lt;</i><i style="left:65.44px;color:#170;transform:scaleX(1.148)">meta</i><i style="left:106.11px;color:#00c;transform:scaleX(1.115)">name</i><i style="left:145.99px;color:#333;transform:scaleX(1.200)">=</i><i style="left:156.85px;color:#a11;transform:scaleX(1.200)">&quot;</i><i style="left:163.05px;color:#a11;transform:scaleX(1.129)">robots</i><i style="left:207.23px;color:#a11;transform:scaleX(1.200)">&quot;</i><i style="left:218.34px;color:#00c;transform:scaleX(1.147)">content</i><i style="left:271.83px;color:#333;transform:scaleX(1.200)">=</i><i style="left:282.70px;color:#a11;transform:scaleX(1.200)">&quot;</i><i style="left:288.89px;color:#a11;transform:scaleX(1.124)">index</i><i style="left:326.72px;color:#a11;transform:scaleX(1.200)">,</i><i style="left:336.52px;color:#a11;transform:scaleX(1.142)">follow</i><i style="left:377.63px;color:#a11;transform:scaleX(1.200)">&quot;</i><i style="left:385.16px;color:#170;transform:scaleX(1.120)">/</i><i style="left:391.67px;color:#170;transform:scaleX(1.200)">&gt;</i></div>
<div class="cl" style="top:124.25px"><span class="ln">8</span><i style="left:54.81px;color:#170;transform:scaleX(1.200)">&lt;</i><i style="left:65.44px;color:#170;transform:scaleX(1.239)">title</i><i style="left:93.26px;color:#170;transform:scaleX(1.200)">&gt;</i><i style="left:103.89px;color:#000;transform:scaleX(1.143)">$</i><i style="left:114.62px;color:#000;transform:scaleX(1.120)">{</i><i style="left:121.69px;color:#000;transform:scaleX(1.146)">field</i><i style="left:151.35px;color:#000;transform:scaleX(1.200)">.</i><i style="left:156.23px;color:#000;transform:scaleX(1.191)">typetitle</i><i style="left:215.51px;color:#000;transform:scaleX(1.120)">}</i><i style="left:223.41px;color:#170;transform:scaleX(1.200)">&lt;</i><i style="left:235.37px;color:#170;transform:scaleX(1.120)">/</i><i style="left:241.07px;color:#170;transform:scaleX(1.239)">title</i><i style="left:268.88px;color:#170;transform:scaleX(1.200)">&gt;</i></div>
<div class="cl" style="top:141.25px"><span class="ln">9</span><i style="left:54.81px;color:#170;transform:scaleX(1.200)">&lt;</i><i style="left:65.44px;color:#170;transform:scaleX(1.148)">meta</i><i style="left:106.11px;color:#00c;transform:scaleX(1.115)">name</i><i style="left:145.99px;color:#333;transform:scaleX(1.200)">=</i><i style="left:156.85px;color:#a11;transform:scaleX(1.200)">&quot;</i><i style="left:163.05px;color:#a11;transform:scaleX(1.113)">keywords</i><i style="left:229.12px;color:#a11;transform:scaleX(1.200)">&quot;</i><i style="left:240.23px;color:#00c;transform:scaleX(1.147)">content</i><i style="left:293.72px;color:#333;transform:scaleX(1.200)">=</i><i style="left:304.58px;color:#a11;transform:scaleX(1.200)">&quot;</i><i style="left:310.78px;color:#a11;transform:scaleX(1.143)">$</i><i style="left:321.51px;color:#a11;transform:scaleX(1.120)">{</i><i style="left:328.58px;color:#a11;transform:scaleX(1.146)">field</i><i style="left:358.24px;color:#a11;transform:scaleX(1.200)">.</i><i style="left:363.12px;color:#a11;transform:scaleX(1.134)">typekeyword</i><i style="left:454.10px;color:#a11;transform:scaleX(1.120)">}</i><i style="left:461.40px;color:#a11;transform:scaleX(1.200)">&quot;</i><i style="left:468.42px;color:#170;transform:scaleX(1.200)">&gt;</i></div>
<div class="cl" style="top:158.25px"><span class="ln">10</span><i style="left:54.81px;color:#170;transform:scaleX(1.200)">&lt;</i><i style="left:65.44px;color:#170;transform:scaleX(1.148)">meta</i><i style="left:106.11px;color:#00c;transform:scaleX(1.115)">name</i><i style="left:145.99px;color:#333;transform:scaleX(1.200)">=</i><i style="left:156.85px;color:#a11;transform:scaleX(1.200)">&quot;</i><i style="left:163.05px;color:#a11;transform:scaleX(1.125)">description</i><i style="left:239.47px;color:#a11;transform:scaleX(1.200)">&quot;</i><i style="left:250.59px;color:#00c;transform:scaleX(1.147)">content</i><i style="left:304.08px;color:#333;transform:scaleX(1.200)">=</i><i style="left:314.94px;color:#a11;transform:scaleX(1.200)">&quot;</i><i style="left:321.14px;color:#a11;transform:scaleX(1.143)">$</i><i style="left:331.87px;color:#a11;transform:scaleX(1.120)">{</i><i style="left:338.94px;color:#a11;transform:scaleX(1.146)">field</i><i style="left:368.59px;color:#a11;transform:scaleX(1.200)">.</i><i style="left:373.47px;color:#a11;transform:scaleX(1.118)">typedescrip</i><i style="left:455.35px;color:#a11;transform:scaleX(1.120)">}</i><i style="left:462.65px;color:#a11;transform:scaleX(1.200)">&quot;</i><i style="left:469.67px;color:#170;transform:scaleX(1.200)">&gt;</i></div>
<div class="cl" style="top:175.25px"><span class="ln">11</span><i style="left:54.81px;color:#170;transform:scaleX(1.200)">&lt;</i><i style="left:65.44px;color:#170;transform:scaleX(1.148)">meta</i><i style="left:106.11px;color:#00c;transform:scaleX(1.219)">http</i><i style="left:135.01px;color:#00c;transform:scaleX(1.200)">-</i><i style="left:141.04px;color:#00c;transform:scaleX(1.124)">equiv</i><i style="left:179.48px;color:#333;transform:scaleX(1.200)">=</i><i style="left:190.34px;color:#a11;transform:scaleX(1.200)">&quot;</i><i style="left:196.54px;color:#a11;transform:scaleX(1.052)">Cache</i><i style="left:239.53px;color:#a11;transform:scaleX(1.200)">-</i><i style="left:245.56px;color:#a11;transform:scaleX(1.121)">Control</i><i style="left:296.41px;color:#a11;transform:scaleX(1.200)">&quot;</i><i style="left:307.53px;color:#00c;transform:scaleX(1.147)">content</i><i style="left:361.01px;color:#333;transform:scaleX(1.200)">=</i><i style="left:371.88px;color:#a11;transform:scaleX(1.200)">&quot;</i><i style="left:378.07px;color:#a11;transform:scaleX(1.108)">no</i><i style="left:395.77px;color:#a11;transform:scaleX(1.200)">-</i><i style="left:401.80px;color:#a11;transform:scaleX(1.155)">transform</i><i style="left:470.32px;color:#a11;transform:scaleX(1.200)">&quot;</i><i style="left:477.85px;color:#170;transform:scaleX(1.120)">/</i><i style="left:484.37px;color:#170;transform:scaleX(1.200)">&gt;</i></div>
<div class="cl" style="top:192.25px"><span class="ln">12</span><i style="left:54.81px;color:#170;transform:scaleX(1.200)">&lt;</i><i style="left:65.44px;color:#170;transform:scaleX(1.148)">meta</i><i style="left:106.11px;color:#00c;transform:scaleX(1.219)">http</i><i style="left:135.01px;color:#00c;transform:scaleX(1.200)">-</i><i style="left:141.04px;color:#00c;transform:scaleX(1.124)">equiv</i><i style="left:179.48px;color:#333;transform:scaleX(1.200)">=</i><i style="left:190.34px;color:#a11;transform:scaleX(1.200)">&quot;</i><i style="left:196.54px;color:#a11;transform:scaleX(1.052)">Cache</i><i style="left:239.53px;color:#a11;transform:scaleX(1.200)">-</i><i style="left:245.56px;color:#a11;transform:scaleX(1.121)">Control</i><i style="left:296.41px;color:#a11;transform:scaleX(1.200)">&quot;</i><i style="left:307.53px;color:#00c;transform:scaleX(1.147)">content</i><i style="left:361.01px;color:#333;transform:scaleX(1.200)">=</i><i style="left:371.88px;color:#a11;transform:scaleX(1.200)">&quot;</i><i style="left:378.07px;color:#a11;transform:scaleX(1.108)">no</i><i style="left:395.77px;color:#a11;transform:scaleX(1.200)">-</i><i style="left:401.80px;color:#a11;transform:scaleX(1.117)">siteapp</i><i style="left:452.46px;color:#a11;transform:scaleX(1.200)">&quot;</i><i style="left:459.99px;color:#170;transform:scaleX(1.120)">/</i><i style="left:466.50px;color:#170;transform:scaleX(1.200)">&gt;</i></div>
<div class="cl" style="top:209.25px"><span class="ln">13</span><i style="left:54.81px;color:#170;transform:scaleX(1.200)">&lt;</i><i style="left:65.44px;color:#170;transform:scaleX(1.148)">meta</i><i style="left:106.11px;color:#00c;transform:scaleX(1.115)">name</i><i style="left:145.99px;color:#333;transform:scaleX(1.200)">=</i><i style="left:156.85px;color:#a11;transform:scaleX(1.200)">&quot;</i><i style="left:163.05px;color:#a11;transform:scaleX(1.106)">applicable</i><i style="left:233.24px;color:#a11;transform:scaleX(1.200)">-</i><i style="left:239.27px;color:#a11;transform:scaleX(1.096)">device</i><i style="left:283.87px;color:#a11;transform:scaleX(1.200)">&quot;</i><i style="left:294.98px;color:#00c;transform:scaleX(1.147)">content</i><i style="left:348.47px;color:#333;transform:scaleX(1.200)">=</i><i style="left:359.33px;color:#a11;transform:scaleX(1.200)">&quot;</i><i style="left:365.53px;color:#a11;transform:scaleX(1.075)">pc</i><i style="left:381.64px;color:#a11;transform:scaleX(1.200)">,</i><i style="left:386.52px;color:#a11;transform:scaleX(1.129)">mobile</i><i style="left:433.33px;color:#a11;transform:scaleX(1.200)">&quot;</i><i style="left:440.86px;color:#170;transform:scaleX(1.120)">/</i><i style="left:447.38px;color:#170;transform:scaleX(1.200)">&gt;</i></div>
<div class="cl" style="top:226.25px"><span class="ln">14</span><i style="left:54.81px;color:#170;transform:scaleX(1.200)">&lt;</i><i style="left:65.44px;color:#170;transform:scaleX(1.169)">link</i><i style="left:94.92px;color:#00c;transform:scaleX(1.150)">href</i><i style="left:123.48px;color:#333;transform:scaleX(1.200)">=</i><i style="left:134.35px;color:#a11;transform:scaleX(1.200)">&quot;</i><i style="left:141.88px;color:#a11;transform:scaleX(1.120)">/</i><i style="left:147.57px;color:#a11;transform:scaleX(1.120)">favicon</i><i style="left:197.47px;color:#a11;transform:scaleX(1.200)">.</i><i style="left:202.35px;color:#a11;transform:scaleX(1.093)">ico</i><i style="left:222.15px;color:#a11;transform:scaleX(1.200)">&quot;</i><i style="left:233.27px;color:#00c;transform:scaleX(1.151)">rel</i><i style="left:252.00px;color:#333;transform:scaleX(1.200)">=</i><i style="left:262.87px;color:#a11;transform:scaleX(1.200)">&quot;</i><i style="left:269.06px;color:#a11;transform:scaleX(1.151)">shortcut</i><i style="left:331.29px;color:#a11;transform:scaleX(1.105)">icon</i><i style="left:359.91px;color:#a11;transform:scaleX(1.200)">&quot;</i><i style="left:367.44px;color:#170;transform:scaleX(1.120)">/</i><i style="left:373.95px;color:#170;transform:scaleX(1.200)">&gt;</i></div>
<div class="cl" style="top:243.25px"><span class="ln">15</span><i style="left:54.81px;color:#170;transform:scaleX(1.200)">&lt;</i><i style="left:65.44px;color:#170;transform:scaleX(1.169)">link</i><i style="left:94.92px;color:#00c;transform:scaleX(1.150)">href</i><i style="left:123.48px;color:#333;transform:scaleX(1.200)">=</i><i style="left:134.35px;color:#a11;transform:scaleX(1.200)">&quot;</i><i style="left:141.88px;color:#a11;transform:scaleX(1.120)">/</i><i style="left:149.40px;color:#a11;transform:scaleX(1.120)">{</i><i style="left:156.47px;color:#a11;transform:scaleX(1.109)">ms</i><i style="left:178.10px;color:#a11;transform:scaleX(1.120)">:</i><i style="left:183.38px;color:#a11;transform:scaleX(1.118)">global</i><i style="left:225.37px;color:#a11;transform:scaleX(1.200)">.</i><i style="left:230.25px;color:#a11;transform:scaleX(1.141)">style</i><i style="left:264.42px;color:#a11;transform:scaleX(1.120)">/</i><i style="left:271.94px;color:#a11;transform:scaleX(1.120)">}</i><i style="left:279.01px;color:#a11;transform:scaleX(1.028)">css</i><i style="left:301.93px;color:#a11;transform:scaleX(1.120)">/</i><i style="left:307.62px;color:#a11;transform:scaleX(1.141)">style</i><i style="left:340.67px;color:#a11;transform:scaleX(1.200)">.</i><i style="left:345.55px;color:#a11;transform:scaleX(1.028)">css</i><i style="left:367.37px;color:#a11;transform:scaleX(1.200)">&quot;</i><i style="left:378.48px;color:#00c;transform:scaleX(1.151)">rel</i><i style="left:397.22px;color:#333;transform:scaleX(1.200)">=</i><i style="left:408.08px;color:#a11;transform:scaleX(1.200)">&quot;</i><i style="left:414.28px;color:#a11;transform:scaleX(1.125)">stylesheet</i><i style="left:485.40px;color:#a11;transform:scaleX(1.200)">&quot;</i><i style="left:492.93px;color:#170;transform:scaleX(1.120)">/</i><i style="left:499.44px;color:#170;transform:scaleX(1.200)">&gt;</i></div>
<div class="cl" style="top:260.25px"><span class="ln">16</span><i style="left:54.81px;color:#170;transform:scaleX(1.200)">&lt;</i><i style="left:65.44px;color:#170;transform:scaleX(1.169)">link</i><i style="left:94.92px;color:#00c;transform:scaleX(1.150)">href</i><i style="left:123.48px;color:#333;transform:scaleX(1.200)">=</i><i style="left:134.35px;color:#a11;transform:scaleX(1.200)">&quot;</i><i style="left:141.88px;color:#a11;transform:scaleX(1.120)">/</i><i style="left:149.40px;color:#a11;transform:scaleX(1.120)">{</i><i style="left:156.47px;color:#a11;transform:scaleX(1.109)">ms</i><i style="left:178.10px;color:#a11;transform:scaleX(1.120)">:</i><i style="left:183.38px;color:#a11;transform:scaleX(1.118)">global</i><i style="left:225.37px;color:#a11;transform:scaleX(1.200)">.</i><i style="left:230.25px;color:#a11;transform:scaleX(1.141)">style</i><i style="left:264.42px;color:#a11;transform:scaleX(1.120)">/</i><i style="left:271.94px;color:#a11;transform:scaleX(1.120)">}</i><i style="left:279.01px;color:#a11;transform:scaleX(1.028)">css</i><i style="left:301.93px;color:#a11;transform:scaleX(1.120)">/</i><i style="left:307.62px;color:#a11;transform:scaleX(1.028)">css</i><i style="left:329.41px;color:#a11;transform:scaleX(1.200)">.</i><i style="left:334.30px;color:#a11;transform:scaleX(1.028)">css</i><i style="left:356.11px;color:#a11;transform:scaleX(1.200)">&quot;</i><i style="left:367.22px;color:#00c;transform:scaleX(1.151)">rel</i><i style="left:385.96px;color:#333;transform:scaleX(1.200)">=</i><i style="left:396.82px;color:#a11;transform:scaleX(1.200)">&quot;</i><i style="left:403.02px;color:#a11;transform:scaleX(1.125)">stylesheet</i><i style="left:474.14px;color:#a11;transform:scaleX(1.200)">&quot;</i><i style="left:481.67px;color:#170;transform:scaleX(1.120)">/</i><i style="left:488.18px;color:#170;transform:scaleX(1.200)">&gt;</i></div>
<div class="cl" style="top:277.25px"><span class="ln">17</span><i style="left:54.81px;color:#170;transform:scaleX(1.200)">&lt;</i><i style="left:65.44px;color:#170;transform:scaleX(1.142)">script</i><i style="left:108.55px;color:#00c;transform:scaleX(1.083)">src</i><i style="left:129.59px;color:#333;transform:scaleX(1.200)">=</i><i style="left:140.45px;color:#a11;transform:scaleX(1.200)">&quot;</i><i style="left:147.98px;color:#a11;transform:scaleX(1.120)">/</i><i style="left:155.51px;color:#a11;transform:scaleX(1.120)">{</i><i style="left:162.58px;color:#a11;transform:scaleX(1.109)">ms</i><i style="left:184.20px;color:#a11;transform:scaleX(1.120)">:</i><i style="left:189.49px;color:#a11;transform:scaleX(1.118)">global</i><i style="left:231.47px;color:#a11;transform:scaleX(1.200)">.</i><i style="left:236.35px;color:#a11;transform:scaleX(1.141)">style</i><i style="left:270.53px;color:#a11;transform:scaleX(1.120)">/</i><i style="left:278.05px;color:#a11;transform:scaleX(1.120)">}</i><i style="left:285.12px;color:#a11;transform:scaleX(1.184)">js</i><i style="left:298.42px;color:#a11;transform:scaleX(1.120)">/</i><i style="left:304.11px;color:#a11;transform:scaleX(1.164)">jquery</i><i style="left:348.93px;color:#a11;transform:scaleX(1.200)">-</i><i style="left:354.96px;color:#a11;transform:scaleX(1.143)">1</i><i style="left:364.07px;color:#a11;transform:scaleX(1.200)">.</i><i style="left:368.95px;color:#a11;transform:scaleX(1.143)">8</i><i style="left:378.07px;color:#a11;transform:scaleX(1.200)">.</i><i style="left:382.95px;color:#a11;transform:scaleX(1.143)">3</i><i style="left:392.06px;color:#a11;transform:scaleX(1.200)">.</i><i style="left:396.94px;color:#a11;transform:scaleX(1.162)">min</i><i style="left:423.36px;color:#a11;transform:scaleX(1.200)">.</i><i style="left:428.24px;color:#a11;transform:scaleX(1.184)">js</i><i style="left:440.44px;color:#a11;transform:scaleX(1.200)">&quot;</i><i style="left:447.46px;color:#170;transform:scaleX(1.200)">&gt;</i><i style="left:458.92px;color:#170;transform:scaleX(1.200)">&lt;</i><i style="left:470.89px;color:#170;transform:scaleX(1.120)">/</i><i style="left:476.58px;color:#170;transform:scaleX(1.142)">script</i><i style="left:515.59px;color:#170;transform:scaleX(1.200)">&gt;</i></div>
<div class="cl" style="top:294.25px"><span class="ln">18</span><i style="left:54.81px;color:#170;transform:scaleX(1.200)">&lt;</i><i style="left:65.44px;color:#170;transform:scaleX(1.142)">script</i><i style="left:108.55px;color:#00c;transform:scaleX(1.151)">type</i><i style="left:139.84px;color:#333;transform:scaleX(1.200)">=</i><i style="left:150.71px;color:#a11;transform:scaleX(1.200)">&quot;</i><i style="left:156.90px;color:#a11;transform:scaleX(1.212)">text</i><i style="left:185.60px;color:#a11;transform:scaleX(1.120)">/</i><i style="left:191.29px;color:#a11;transform:scaleX(1.148)">javascript</i><i style="left:259.38px;color:#a11;transform:scaleX(1.200)">&quot;</i><i style="left:270.50px;color:#00c;transform:scaleX(1.083)">src</i><i style="left:291.53px;color:#333;transform:scaleX(1.200)">=</i><i style="left:302.40px;color:#a11;transform:scaleX(1.200)">&quot;</i><i style="left:309.93px;color:#a11;transform:scaleX(1.120)">/</i><i style="left:317.45px;color:#a11;transform:scaleX(1.120)">{</i><i style="left:324.52px;color:#a11;transform:scaleX(1.109)">ms</i><i style="left:346.15px;color:#a11;transform:scaleX(1.120)">:</i><i style="left:351.43px;color:#a11;transform:scaleX(1.118)">global</i><i style="left:393.41px;color:#a11;transform:scaleX(1.200)">.</i><i style="left:398.29px;color:#a11;transform:scaleX(1.141)">style</i><i style="left:432.47px;color:#a11;transform:scaleX(1.120)">/</i><i style="left:439.99px;color:#a11;transform:scaleX(1.120)">}</i><i style="left:447.06px;color:#a11;transform:scaleX(1.184)">js</i><i style="left:460.37px;color:#a11;transform:scaleX(1.120)">/</i><i style="left:466.06px;color:#a11;transform:scaleX(1.164)">jquery</i><i style="left:510.65px;color:#a11;transform:scaleX(1.200)">.</i><i style="left:515.53px;color:#a11;transform:scaleX(1.103)">superslide</i><i style="left:586.14px;color:#a11;transform:scaleX(1.200)">.</i><i style="left:591.02px;color:#a11;transform:scaleX(1.143)">2</i><i style="left:600.13px;color:#a11;transform:scaleX(1.200)">.</i><i style="left:605.01px;color:#a11;transform:scaleX(1.143)">1</i><i style="left:614.12px;color:#a11;transform:scaleX(1.200)">.</i><i style="left:619.01px;color:#a11;transform:scaleX(1.143)">1</i><i style="left:628.12px;color:#a11;transform:scaleX(1.200)">.</i><i style="left:633.00px;color:#a11;transform:scaleX(1.184)">js</i><i style="left:645.20px;color:#a11;transform:scaleX(1.200)">&quot;</i><i style="left:652.22px;color:#170;transform:scaleX(1.200)">&gt;</i><i style="left:664.19px;color:#000;transform:scaleX(1.120)">/</i><i style="left:671.21px;color:#000;transform:scaleX(1.120)">/</i><i style="left:676.91px;color:#000;transform:scaleX(1.075)">pc</i><i style="left:692.81px;color:#000">导航</i><i style="left:721.63px;color:#170;transform:scaleX(1.200)">&lt;</i><i style="left:733.60px;color:#170;transform:scaleX(1.120)">/</i><i style="left:739.29px;color:#170;transform:scaleX(1.142)">script</i><i style="left:778.30px;color:#170;transform:scaleX(1.200)">&gt;</i></div>
<div class="cl" style="top:314.25px"><span class="ln">19</span><i style="left:54.81px;color:#170;transform:scaleX(1.200)">&lt;</i><i style="left:65.44px;color:#170;transform:scaleX(1.142)">script</i><i style="left:108.55px;color:#00c;transform:scaleX(1.083)">src</i><i style="left:129.59px;color:#333;transform:scaleX(1.200)">=</i><i style="left:140.45px;color:#a11;transform:scaleX(1.200)">&quot;</i><i style="left:147.98px;color:#a11;transform:scaleX(1.120)">/</i><i style="left:155.51px;color:#a11;transform:scaleX(1.120)">{</i><i style="left:162.58px;color:#a11;transform:scaleX(1.109)">ms</i><i style="left:184.20px;color:#a11;transform:scaleX(1.120)">:</i><i style="left:189.49px;color:#a11;transform:scaleX(1.118)">global</i><i style="left:231.47px;color:#a11;transform:scaleX(1.200)">.</i><i style="left:236.35px;color:#a11;transform:scaleX(1.141)">style</i><i style="left:270.53px;color:#a11;transform:scaleX(1.120)">/</i><i style="left:278.05px;color:#a11;transform:scaleX(1.120)">}</i><i style="left:285.12px;color:#a11;transform:scaleX(1.184)">js</i><i style="left:298.42px;color:#a11;transform:scaleX(1.120)">/</i><i style="left:304.11px;color:#a11;transform:scaleX(1.141)">anim</i><i style="left:338.94px;color:#a11;transform:scaleX(1.200)">.</i><i style="left:343.82px;color:#a11;transform:scaleX(1.184)">js</i><i style="left:356.02px;color:#a11;transform:scaleX(1.200)">&quot;</i><i style="left:363.04px;color:#170;transform:scaleX(1.200)">&gt;</i><i style="left:375.01px;color:#000;transform:scaleX(1.120)">/</i><i style="left:382.03px;color:#000;transform:scaleX(1.120)">/</i><i style="left:387.72px;color:#000">动画</i><i style="left:416.55px;color:#170;transform:scaleX(1.200)">&lt;</i><i style="left:428.52px;color:#170;transform:scaleX(1.120)">/</i><i style="left:434.21px;color:#170;transform:scaleX(1.142)">script</i><i style="left:473.22px;color:#170;transform:scaleX(1.200)">&gt;</i></div>
<div class="cl" style="top:334.25px"><span class="ln">20</span><i style="left:54.81px;color:#170;transform:scaleX(1.200)">&lt;</i><i style="left:65.44px;color:#170;transform:scaleX(1.142)">script</i><i style="left:108.55px;color:#00c;transform:scaleX(1.151)">type</i><i style="left:139.84px;color:#333;transform:scaleX(1.200)">=</i><i style="left:150.71px;color:#a11;transform:scaleX(1.200)">&quot;</i><i style="left:156.90px;color:#a11;transform:scaleX(1.212)">text</i><i style="left:185.60px;color:#a11;transform:scaleX(1.120)">/</i><i style="left:191.29px;color:#a11;transform:scaleX(1.148)">javascript</i><i style="left:259.38px;color:#a11;transform:scaleX(1.200)">&quot;</i><i style="left:270.50px;color:#00c;transform:scaleX(1.083)">src</i><i style="left:291.53px;color:#333;transform:scaleX(1.200)">=</i><i style="left:302.40px;color:#a11;transform:scaleX(1.200)">&quot;</i><i style="left:309.93px;color:#a11;transform:scaleX(1.120)">/</i><i style="left:317.45px;color:#a11;transform:scaleX(1.120)">{</i><i style="left:324.52px;color:#a11;transform:scaleX(1.109)">ms</i><i style="left:346.15px;color:#a11;transform:scaleX(1.120)">:</i><i style="left:351.43px;color:#a11;transform:scaleX(1.118)">global</i><i style="left:393.41px;color:#a11;transform:scaleX(1.200)">.</i><i style="left:398.29px;color:#a11;transform:scaleX(1.141)">style</i><i style="left:432.47px;color:#a11;transform:scaleX(1.120)">/</i><i style="left:439.99px;color:#a11;transform:scaleX(1.120)">}</i><i style="left:447.06px;color:#a11;transform:scaleX(1.184)">js</i><i style="left:460.37px;color:#a11;transform:scaleX(1.120)">/</i><i style="left:466.06px;color:#a11;transform:scaleX(1.080)">basic</i><i style="left:501.56px;color:#a11;transform:scaleX(1.200)">.</i><i style="left:506.44px;color:#a11;transform:scaleX(1.184)">js</i><i style="left:518.65px;color:#a11;transform:scaleX(1.200)">&quot;</i><i style="left:525.66px;color:#170;transform:scaleX(1.200)">&gt;</i><i style="left:537.12px;color:#170;transform:scaleX(1.200)">&lt;</i><i style="left:549.09px;color:#170;transform:scaleX(1.120)">/</i><i style="left:554.78px;color:#170;transform:scaleX(1.142)">script</i><i style="left:593.79px;color:#170;transform:scaleX(1.200)">&gt;</i></div>
<div class="cl" style="top:351.25px"><span class="ln">21</span><i style="left:35.12px;color:#170;transform:scaleX(1.200)">&lt;</i><i style="left:47.09px;color:#170;transform:scaleX(1.120)">/</i><i style="left:52.78px;color:#170;transform:scaleX(1.096)">head</i><i style="left:87.73px;color:#170;transform:scaleX(1.200)">&gt;</i></div>
<div class="cl" style="top:368.25px"><span class="ln">22</span><i style="left:35.12px;color:#170;transform:scaleX(1.200)">&lt;</i><i style="left:45.76px;color:#170;transform:scaleX(1.111)">body</i><i style="left:80.32px;color:#170;transform:scaleX(1.200)">&gt;</i></div>
<div class="cl" style="top:385.25px"><span class="ln">23</span><i style="left:35.12px;color:#170;transform:scaleX(1.200)">&lt;</i><i style="left:46.81px;color:#170;transform:scaleX(1.200)">#</i><i style="left:57.21px;color:#170;transform:scaleX(1.116)">include</i><i style="left:111.87px;color:#f00;transform:scaleX(1.200)">&quot;</i><i style="left:118.07px;color:#f00;transform:scaleX(1.106)">header</i><i style="left:166.47px;color:#f00;transform:scaleX(1.200)">.</i><i style="left:171.35px;color:#f00;transform:scaleX(1.194)">htm</i><i style="left:199.46px;color:#555;transform:scaleX(1.200)">&quot;</i><i style="left:211.91px;color:#170;transform:scaleX(1.120)">/</i><i style="left:218.43px;color:#170;transform:scaleX(1.200)">&gt;</i></div>
<div class="cl" style="top:402.25px"><span class="ln">24</span><i style="left:35.12px;color:#170;transform:scaleX(1.200)">&lt;</i><i style="left:45.76px;color:#170;transform:scaleX(1.146)">div</i><i style="left:71.19px;color:#00c;transform:scaleX(1.060)">class</i><i style="left:105.84px;color:#333;transform:scaleX(1.200)">=</i><i style="left:116.71px;color:#a11;transform:scaleX(1.200)">&quot;</i><i style="left:122.90px;color:#a11;transform:scaleX(1.084)">o</i><i style="left:131.34px;color:#a11;transform:scaleX(1.143)">_</i><i style="left:140.24px;color:#a11;transform:scaleX(1.128)">big</i><i style="left:161.56px;color:#a11;transform:scaleX(1.200)">&quot;</i><i style="left:173.50px;color:#170;transform:scaleX(1.200)">&gt;</i></div>
<div class="cl" style="top:419.25px"><span class="ln">25</span><i style="left:54.81px;color:#170;transform:scaleX(1.200)">&lt;</i><i style="left:65.44px;color:#170;transform:scaleX(1.153)">img</i><i style="left:96.38px;color:#00c;transform:scaleX(1.083)">src</i><i style="left:117.41px;color:#333;transform:scaleX(1.200)">=</i><i style="left:128.28px;color:#a11;transform:scaleX(1.200)">&quot;</i><i style="left:136.31px;color:#a11;transform:scaleX(1.120)">{</i><i style="left:143.37px;color:#a11;transform:scaleX(0.985)">@</i><i style="left:157.37px;color:#a11;transform:scaleX(1.109)">ms</i><i style="left:179.00px;color:#a11;transform:scaleX(1.120)">:</i><i style="left:184.29px;color:#a11;transform:scaleX(1.163)">file</i><i style="left:210.03px;color:#a11;transform:scaleX(1.146)">field</i><i style="left:239.69px;color:#a11;transform:scaleX(1.200)">.</i><i style="left:244.57px;color:#a11;transform:scaleX(1.164)">typelitpic</i><i style="left:309.31px;color:#a11;transform:scaleX(1.120)">/</i><i style="left:316.83px;color:#a11;transform:scaleX(1.120)">}</i><i style="left:324.13px;color:#a11;transform:scaleX(1.200)">&quot;</i><i style="left:335.25px;color:#00c;transform:scaleX(1.201)">alt</i><i style="left:353.82px;color:#333;transform:scaleX(1.200)">=</i><i style="left:364.69px;color:#a11;transform:scaleX(1.200)">&quot;</i><i style="left:370.88px;color:#a11">CMS</i><i style="left:402.32px;color:#a11;transform:scaleX(1.200)">,</i><i style="left:407.20px;color:#a11">免费</i><i style="left:435.20px;color:#a11">CMS</i><i style="left:466.64px;color:#a11;transform:scaleX(1.200)">,</i><i style="left:471.52px;color:#a11">免费开源</i><i style="left:527.52px;color:#a11;transform:scaleX(1.061)">Java</i><i style="left:563.80px;color:#a11">CMS</i><i style="left:595.24px;color:#a11;transform:scaleX(1.200)">,</i><i style="left:600.12px;color:#a11">CMS</i><i style="left:631.35px;color:#a11">系统</i><i style="left:659.56px;color:#a11;transform:scaleX(1.200)">,</i><i style="left:664.44px;color:#a11;transform:scaleX(1.061)">Java</i><i style="left:700.73px;color:#a11">CMS</i><i style="left:732.17px;color:#a11;transform:scaleX(1.200)">,</i><i style="left:737.05px;color:#a11">CMS</i><i style="left:768.27px;color:#a11">内容管理系统</i><i style="left:852.49px;color:#a11;transform:scaleX(1.200)">,</i><i style="left:857.37px;color:#a11">企业</i><i style="left:885.37px;color:#a11">CMS</i><i style="left:916.81px;color:#a11;transform:scaleX(1.200)">,</i><i style="left:921.69px;color:#a11;transform:scaleX(1.017)">HTML</i><i style="left:960.44px;color:#a11">网页模板</i><i style="left:1016.65px;color:#a11;transform:scaleX(1.200)">,</i><i style="left:1021.53px;color:#a11">CMS</i><i style="left:1052.76px;color:#a11">模板</i><i style="left:1080.97px;color:#a11;transform:scaleX(1.200)">,</i><i style="left:1085.85px;color:#a11">CMS</i><i style="left:1117.08px;color:#a11">源码</i><i style="left:1145.29px;color:#a11;transform:scaleX(1.200)">,</i><i style="left:1150.17px;color:#a11">网站源码</i><i style="left:1206.38px;color:#a11;transform:scaleX(1.200)">,</i><i style="left:1211.26px;color:#a11">信创系统</i></div>
<div class="cl" style="top:439.25px"><span class="ln"></span><i style="left:34.30px;color:#a11">软件</i><i style="left:62.51px;color:#a11;transform:scaleX(1.200)">,</i><i style="left:67.39px;color:#a11">安可系统</i><i style="left:123.61px;color:#a11;transform:scaleX(1.200)">,</i><i style="left:128.49px;color:#a11">网站建设</i><i style="left:184.70px;color:#a11;transform:scaleX(1.200)">,</i><i style="left:189.58px;color:#a11">模板网站</i><i style="left:245.79px;color:#a11;transform:scaleX(1.200)">,</i><i style="left:250.67px;color:#a11">建站模板</i><i style="left:306.88px;color:#a11;transform:scaleX(1.200)">,</i><i style="left:311.76px;color:#a11">建站工具</i><i style="left:367.98px;color:#a11;transform:scaleX(1.200)">,</i><i style="left:372.86px;color:#a11">建站平台</i><i style="left:429.07px;color:#a11;transform:scaleX(1.200)">,</i><i style="left:433.95px;color:#a11">建站工具</i><i style="left:490.18px;color:#a11;transform:scaleX(1.200)">&quot;</i><i style="left:497.71px;color:#170;transform:scaleX(1.120)">/</i><i style="left:504.23px;color:#170;transform:scaleX(1.200)">&gt;</i></div>
<div class="cl" style="top:459.25px"><span class="ln">26</span><i style="left:54.81px;color:#170;transform:scaleX(1.200)">&lt;</i><i style="left:65.44px;color:#170;transform:scaleX(1.138)">h1</i><i style="left:88.91px;color:#170;transform:scaleX(1.200)">&gt;</i><i style="left:99.54px;color:#000;transform:scaleX(1.143)">$</i><i style="left:110.27px;color:#000;transform:scaleX(1.120)">{</i><i style="left:117.34px;color:#000;transform:scaleX(1.146)">field</i><i style="left:147.00px;color:#000;transform:scaleX(1.200)">.</i><i style="left:151.88px;color:#000;transform:scaleX(1.118)">typedescrip</i><i style="left:233.76px;color:#000;transform:scaleX(1.120)">}</i><i style="left:241.65px;color:#170;transform:scaleX(1.200)">&lt;</i><i style="left:253.62px;color:#170;transform:scaleX(1.120)">/</i><i style="left:259.31px;color:#170;transform:scaleX(1.138)">h1</i><i style="left:277.85px;color:#170;transform:scaleX(1.200)">&gt;</i></div>
<div class="cl" style="top:476.25px"><span class="ln">27</span><i style="left:35.12px;color:#170;transform:scaleX(1.200)">&lt;</i><i style="left:47.09px;color:#170;transform:scaleX(1.120)">/</i><i style="left:52.78px;color:#170;transform:scaleX(1.146)">div</i><i style="left:74.12px;color:#170;transform:scaleX(1.200)">&gt;</i></div>
<div class="cl" style="top:493.25px"><span class="ln">28</span><i style="left:35.12px;color:#a50;transform:scaleX(1.200)">&lt;</i><i style="left:46.18px;color:#a50;transform:scaleX(1.200)">!</i><i style="left:51.70px;color:#a50;transform:scaleX(1.200)">-</i><i style="left:58.17px;color:#a50;transform:scaleX(1.200)">-</i><i style="left:64.20px;color:#a50">正文</i><i style="left:92.20px;color:#a50;transform:scaleX(1.115)">begin</i><i style="left:130.82px;color:#a50;transform:scaleX(1.200)">-</i><i style="left:137.29px;color:#a50;transform:scaleX(1.200)">-</i><i style="left:144.14px;color:#a50;transform:scaleX(1.200)">&gt;</i></div>
<div class="cl" style="top:513.25px"><span class="ln">29</span><i style="left:35.12px;color:#170;transform:scaleX(1.200)">&lt;</i><i style="left:45.76px;color:#170;transform:scaleX(1.146)">div</i><i style="left:71.19px;color:#00c;transform:scaleX(1.060)">class</i><i style="left:105.84px;color:#333;transform:scaleX(1.200)">=</i><i style="left:116.71px;color:#a11;transform:scaleX(1.200)">&quot;</i><i style="left:122.90px;color:#a11;transform:scaleX(1.129)">wrap</i><i style="left:157.39px;color:#a11;transform:scaleX(1.200)">&quot;</i><i style="left:164.40px;color:#170;transform:scaleX(1.200)">&gt;</i></div>
<div class="cl" style="top:530.25px"><span class="ln">30</span><i style="left:54.81px;color:#170;transform:scaleX(1.200)">&lt;</i><i style="left:65.44px;color:#170;transform:scaleX(1.146)">div</i><i style="left:90.88px;color:#00c;transform:scaleX(1.060)">class</i><i style="left:125.53px;color:#333;transform:scaleX(1.200)">=</i><i style="left:136.39px;color:#a11;transform:scaleX(1.200)">&quot;</i><i style="left:142.59px;color:#a11;transform:scaleX(1.137)">product</i><i style="left:195.66px;color:#a11;transform:scaleX(1.143)">_</i><i style="left:204.56px;color:#a11;transform:scaleX(1.079)">a</i><i style="left:217.89px;color:#a11;transform:scaleX(1.141)">anim</i><i style="left:257.42px;color:#a11;transform:scaleX(1.141)">anim</i><i style="left:292.46px;color:#a11;transform:scaleX(1.200)">-</i><i style="left:298.50px;color:#a11;transform:scaleX(1.143)">1</i><i style="left:307.63px;color:#a11;transform:scaleX(1.200)">&quot;</i><i style="left:314.64px;color:#170;transform:scaleX(1.200)">&gt;</i></div>
<div class="cl" style="top:547.25px"><span class="ln">31</span><i style="left:74.50px;color:#170;transform:scaleX(1.200)">&lt;</i><i style="left:86.19px;color:#170;transform:scaleX(1.200)">#</i><i style="left:96.59px;color:#170;transform:scaleX(1.242)">if</i><i style="left:110.21px;color:#00c;transform:scaleX(1.146)">field</i><i style="left:139.86px;color:#00c;transform:scaleX(1.200)">.</i><i style="left:144.74px;color:#00c;transform:scaleX(1.139)">typeleaf</i><i style="left:205.93px;color:#00c;transform:scaleX(1.200)">!</i><i style="left:211.85px;color:#333;transform:scaleX(1.200)">=</i><i style="left:222.48px;color:#a11;transform:scaleX(1.143)">0</i><i style="left:232.20px;color:#170;transform:scaleX(1.200)">&gt;</i></div>
<div class="cl" style="top:564.25px"><span class="ln">32</span><i style="left:75.51px;color:#000;transform:scaleX(1.120)">{</i><i style="left:82.58px;color:#000;transform:scaleX(1.109)">ms</i><i style="left:104.20px;color:#000;transform:scaleX(1.120)">:</i><i style="left:109.49px;color:#000;transform:scaleX(1.106)">channel</i><i style="left:168.67px;color:#000;transform:scaleX(1.151)">type</i><i style="left:199.96px;color:#000;transform:scaleX(1.200)">=</i><i style="left:210.88px;color:#000;transform:scaleX(1.200)">&#x27;</i><i style="left:214.36px;color:#000;transform:scaleX(1.122)">level</i><i style="left:246.94px;color:#000;transform:scaleX(1.200)">&#x27;</i><i style="left:252.26px;color:#000;transform:scaleX(1.120)">}</i></div>
<div class="cl" style="top:581.25px"><span class="ln">33</span><i style="left:94.19px;color:#170;transform:scaleX(1.200)">&lt;</i><i style="left:105.88px;color:#170;transform:scaleX(1.200)">#</i><i style="left:116.28px;color:#170;transform:scaleX(1.242)">if</i><i style="left:129.89px;color:#00c;transform:scaleX(1.146)">field</i><i style="left:159.55px;color:#00c;transform:scaleX(1.200)">.</i><i style="left:164.43px;color:#00c;transform:scaleX(1.149)">typeid</i><i style="left:213.10px;color:#333;transform:scaleX(1.200)">=</i><i style="left:224.56px;color:#f00;transform:scaleX(1.200)">=</i><i style="left:240.12px;color:#00c;transform:scaleX(1.149)">typeid</i><i style="left:289.12px;color:#00c;transform:scaleX(1.120)">|</i><i style="left:295.51px;color:#00c;transform:scaleX(1.120)">|</i><i style="left:306.34px;color:#00c;transform:scaleX(1.200)">(</i><i style="left:312.62px;color:#00c;transform:scaleX(1.096)">ids</i><i style="left:332.23px;color:#00c;transform:scaleX(0.981)">?</i><i style="left:339.87px;color:#00c;transform:scaleX(1.080)">has</i><i style="left:364.24px;color:#00c;transform:scaleX(1.143)">_</i><i style="left:373.14px;color:#00c;transform:scaleX(1.147)">content</i><i style="left:430.72px;color:#00c;transform:scaleX(1.089)">&amp;</i><i style="left:440.89px;color:#00c;transform:scaleX(1.089)">&amp;</i><i style="left:455.99px;color:#00c;transform:scaleX(1.096)">ids</i><i style="left:475.60px;color:#00c;transform:scaleX(0.981)">?</i><i style="left:483.24px;color:#00c;transform:scaleX(1.163)">split</i><i style="left:512.88px;color:#00c;transform:scaleX(1.200)">(</i><i style="left:519.39px;color:#f00;transform:scaleX(1.200)">&quot;</i><i style="left:525.80px;color:#f00;transform:scaleX(1.200)">,</i><i style="left:530.91px;color:#f00;transform:scaleX(1.200)">&quot;</i><i style="left:537.79px;color:#00c;transform:scaleX(1.200)">)</i><i style="left:544.06px;color:#00c;transform:scaleX(0.981)">?</i><i style="left:551.70px;color:#00c;transform:scaleX(1.066)">seq</i><i style="left:575.75px;color:#00c;transform:scaleX(1.143)">_</i><i style="left:584.65px;color:#00c;transform:scaleX(1.117)">contains</i><i style="left:643.60px;color:#00c;transform:scaleX(1.200)">(</i><i style="left:649.88px;color:#00c;transform:scaleX(1.146)">field</i><i style="left:679.53px;color:#00c;transform:scaleX(1.200)">.</i><i style="left:684.41px;color:#00c;transform:scaleX(1.149)">typeid</i><i style="left:727.55px;color:#00c;transform:scaleX(1.200)">.</i><i style="left:732.43px;color:#00c;transform:scaleX(1.163)">toString</i><i style="left:789.22px;color:#00c;transform:scaleX(1.200)">(</i><i style="left:796.18px;color:#00c;transform:scaleX(1.200)">)</i><i style="left:803.14px;color:#00c;transform:scaleX(1.200)">)</i><i style="left:810.10px;color:#00c;transform:scaleX(1.200)">)</i><i style="left:817.20px;color:#170;transform:scaleX(1.200)">&gt;</i></div>
<div class="cl" style="top:598.25px"><span class="ln">34</span><i style="left:94.19px;color:#170;transform:scaleX(1.200)">&lt;</i><i style="left:104.82px;color:#170;transform:scaleX(1.079)">a</i><i style="left:118.14px;color:#00c;transform:scaleX(1.150)">href</i><i style="left:146.71px;color:#333;transform:scaleX(1.200)">=</i><i style="left:157.62px;color:#a11;transform:scaleX(1.200)">&#x27;</i><i style="left:161.92px;color:#a11;transform:scaleX(1.200)">&lt;</i><i style="left:173.61px;color:#a11;transform:scaleX(1.200)">#</i><i style="left:184.01px;color:#a11;transform:scaleX(1.242)">if</i><i style="left:197.63px;color:#a11;transform:scaleX(1.146)">field</i><i style="left:227.29px;color:#a11;transform:scaleX(1.200)">.</i><i style="left:232.17px;color:#a11;transform:scaleX(1.151)">type</i><i style="left:263.46px;color:#a11;transform:scaleX(1.200)">=</i><i style="left:274.91px;color:#a11;transform:scaleX(1.200)">=</i><i style="left:285.55px;color:#a11;transform:scaleX(1.143)">3</i><i style="left:295.27px;color:#a11;transform:scaleX(1.200)">&gt;</i><i style="left:307.74px;color:#a11;transform:scaleX(1.120)">{</i><i style="left:314.81px;color:#a11;transform:scaleX(1.109)">ms</i><i style="left:336.43px;color:#a11;transform:scaleX(1.120)">:</i><i style="left:341.72px;color:#a11;transform:scaleX(1.118)">global</i><i style="left:383.70px;color:#a11;transform:scaleX(1.200)">.</i><i style="left:388.58px;color:#a11;transform:scaleX(1.199)">html</i><i style="left:421.63px;color:#a11;transform:scaleX(1.120)">/</i><i style="left:429.16px;color:#a11;transform:scaleX(1.120)">}</i><i style="left:436.23px;color:#a11;transform:scaleX(1.143)">$</i><i style="left:446.96px;color:#a11;transform:scaleX(1.120)">{</i><i style="left:454.03px;color:#a11;transform:scaleX(1.146)">field</i><i style="left:483.68px;color:#a11;transform:scaleX(1.200)">.</i><i style="left:488.56px;color:#a11;transform:scaleX(1.164)">typeurl</i><i style="left:539.30px;color:#a11;transform:scaleX(1.120)">}</i><i style="left:547.20px;color:#a11;transform:scaleX(1.200)">&lt;</i><i style="left:558.89px;color:#a11;transform:scaleX(1.200)">#</i><i style="left:569.29px;color:#a11;transform:scaleX(1.073)">else</i><i style="left:597.67px;color:#a11;transform:scaleX(1.200)">&gt;</i><i style="left:610.14px;color:#a11;transform:scaleX(1.120)">{</i><i style="left:617.21px;color:#a11;transform:scaleX(1.109)">ms</i><i style="left:638.84px;color:#a11;transform:scaleX(1.120)">:</i><i style="left:644.12px;color:#a11;transform:scaleX(1.118)">global</i><i style="left:686.10px;color:#a11;transform:scaleX(1.200)">.</i><i style="left:690.98px;color:#a11;transform:scaleX(1.199)">html</i><i style="left:724.03px;color:#a11;transform:scaleX(1.120)">/</i><i style="left:731.56px;color:#a11;transform:scaleX(1.120)">}</i><i style="left:738.63px;color:#a11;transform:scaleX(1.143)">$</i><i style="left:749.36px;color:#a11;transform:scaleX(1.120)">{</i><i style="left:756.43px;color:#a11;transform:scaleX(1.146)">field</i><i style="left:786.08px;color:#a11;transform:scaleX(1.200)">.</i><i style="left:790.96px;color:#a11;transform:scaleX(1.159)">typelink</i><i style="left:847.82px;color:#a11;transform:scaleX(1.120)">}</i><i style="left:855.71px;color:#a11;transform:scaleX(1.200)">&lt;</i><i style="left:867.68px;color:#a11;transform:scaleX(1.120)">/</i><i style="left:874.43px;color:#a11;transform:scaleX(1.200)">#</i><i style="left:884.83px;color:#a11;transform:scaleX(1.242)">if</i><i style="left:894.35px;color:#a11;transform:scaleX(1.200)">&gt;</i><i style="left:905.26px;color:#a11;transform:scaleX(1.200)">&#x27;</i><i style="left:913.66px;color:#00c;transform:scaleX(1.060)">class</i><i style="left:948.31px;color:#333;transform:scaleX(1.200)">=</i><i style="left:959.22px;color:#a11;transform:scaleX(1.200)">&#x27;</i><i style="left:962.70px;color:#a11;transform:scaleX(1.067)">csel</i><i style="left:989.54px;color:#a11;transform:scaleX(1.200)">&#x27;</i><i style="left:993.84px;color:#170;transform:scaleX(1.200)">&gt;</i><i style="left:1004.48px;color:#000;transform:scaleX(1.143)">$</i><i style="left:1015.21px;color:#000;transform:scaleX(1.120)">{</i><i style="left:1022.28px;color:#000;transform:scaleX(1.146)">field</i><i style="left:1051.93px;color:#000;transform:scaleX(1.200)">.</i><i style="left:1056.81px;color:#000;transform:scaleX(1.191)">typetitle</i><i style="left:1116.10px;color:#000;transform:scaleX(1.120)">}</i><i style="left:1123.99px;color:#170;transform:scaleX(1.200)">&lt;</i><i style="left:1135.96px;color:#170;transform:scaleX(1.120)">/</i><i style="left:1141.65px;color:#170;transform:scaleX(1.079)">a</i><i style="left:1150.88px;color:#170;transform:scaleX(1.200)">&gt;</i></div>
<div class="cl" style="top:615.25px"><span class="ln">35</span><i style="left:94.19px;color:#170;transform:scaleX(1.200)">&lt;</i><i style="left:105.88px;color:#170;transform:scaleX(1.200)">#</i><i style="left:116.28px;color:#170;transform:scaleX(1.073)">else</i><i style="left:144.66px;color:#170;transform:scaleX(1.200)">&gt;</i></div>
<div class="cl" style="top:632.25px"><span class="ln">36</span><i style="left:94.19px;color:#170;transform:scaleX(1.200)">&lt;</i><i style="left:104.82px;color:#170;transform:scaleX(1.079)">a</i><i style="left:118.14px;color:#00c;transform:scaleX(1.150)">href</i><i style="left:146.71px;color:#333;transform:scaleX(1.200)">=</i><i style="left:157.57px;color:#a11;transform:scaleX(1.200)">&quot;</i><i style="left:164.59px;color:#a11;transform:scaleX(1.200)">&lt;</i><i style="left:176.28px;color:#a11;transform:scaleX(1.200)">#</i><i style="left:186.68px;color:#a11;transform:scaleX(1.242)">if</i><i style="left:200.30px;color:#a11;transform:scaleX(1.146)">field</i><i style="left:229.95px;color:#a11;transform:scaleX(1.200)">.</i><i style="left:234.83px;color:#a11;transform:scaleX(1.151)">type</i><i style="left:266.12px;color:#a11;transform:scaleX(1.200)">=</i><i style="left:277.58px;color:#a11;transform:scaleX(1.200)">=</i><i style="left:288.21px;color:#a11;transform:scaleX(1.143)">3</i><i style="left:297.94px;color:#a11;transform:scaleX(1.200)">&gt;</i><i style="left:310.40px;color:#a11;transform:scaleX(1.120)">{</i><i style="left:317.47px;color:#a11;transform:scaleX(1.109)">ms</i><i style="left:339.10px;color:#a11;transform:scaleX(1.120)">:</i><i style="left:344.38px;color:#a11;transform:scaleX(1.118)">global</i><i style="left:386.37px;color:#a11;transform:scaleX(1.200)">.</i><i style="left:391.25px;color:#a11;transform:scaleX(1.199)">html</i><i style="left:424.30px;color:#a11;transform:scaleX(1.120)">/</i><i style="left:431.82px;color:#a11;transform:scaleX(1.120)">}</i><i style="left:438.89px;color:#a11;transform:scaleX(1.143)">$</i><i style="left:449.62px;color:#a11;transform:scaleX(1.120)">{</i><i style="left:456.69px;color:#a11;transform:scaleX(1.146)">field</i><i style="left:486.35px;color:#a11;transform:scaleX(1.200)">.</i><i style="left:491.23px;color:#a11;transform:scaleX(1.164)">typeurl</i><i style="left:541.97px;color:#a11;transform:scaleX(1.120)">}</i><i style="left:549.86px;color:#a11;transform:scaleX(1.200)">&lt;</i><i style="left:561.55px;color:#a11;transform:scaleX(1.200)">#</i><i style="left:571.95px;color:#a11;transform:scaleX(1.073)">else</i><i style="left:600.34px;color:#a11;transform:scaleX(1.200)">&gt;</i><i style="left:612.80px;color:#a11;transform:scaleX(1.120)">{</i><i style="left:619.87px;color:#a11;transform:scaleX(1.109)">ms</i><i style="left:641.50px;color:#a11;transform:scaleX(1.120)">:</i><i style="left:646.79px;color:#a11;transform:scaleX(1.118)">global</i><i style="left:688.77px;color:#a11;transform:scaleX(1.200)">.</i><i style="left:693.65px;color:#a11;transform:scaleX(1.199)">html</i><i style="left:726.70px;color:#a11;transform:scaleX(1.120)">/</i><i style="left:734.22px;color:#a11;transform:scaleX(1.120)">}</i><i style="left:741.29px;color:#a11;transform:scaleX(1.143)">$</i><i style="left:752.03px;color:#a11;transform:scaleX(1.120)">{</i><i style="left:759.09px;color:#a11;transform:scaleX(1.146)">field</i><i style="left:788.75px;color:#a11;transform:scaleX(1.200)">.</i><i style="left:793.63px;color:#a11;transform:scaleX(1.159)">typelink</i><i style="left:850.48px;color:#a11;transform:scaleX(1.120)">}</i><i style="left:858.38px;color:#a11;transform:scaleX(1.200)">&lt;</i><i style="left:870.34px;color:#a11;transform:scaleX(1.120)">/</i><i style="left:877.09px;color:#a11;transform:scaleX(1.200)">#</i><i style="left:887.49px;color:#a11;transform:scaleX(1.242)">if</i><i style="left:897.01px;color:#a11;transform:scaleX(1.200)">&gt;</i><i style="left:907.88px;color:#a11;transform:scaleX(1.200)">&quot;</i><i style="left:914.89px;color:#170;transform:scaleX(1.200)">&gt;</i><i style="left:925.53px;color:#000;transform:scaleX(1.143)">$</i><i style="left:936.26px;color:#000;transform:scaleX(1.120)">{</i><i style="left:943.33px;color:#000;transform:scaleX(1.146)">field</i><i style="left:972.98px;color:#000;transform:scaleX(1.200)">.</i><i style="left:977.86px;color:#000;transform:scaleX(1.191)">typetitle</i><i style="left:1037.15px;color:#000;transform:scaleX(1.120)">}</i><i style="left:1045.04px;color:#170;transform:scaleX(1.200)">&lt;</i><i style="left:1057.01px;color:#170;transform:scaleX(1.120)">/</i><i style="left:1062.71px;color:#170;transform:scaleX(1.079)">a</i><i style="left:1071.93px;color:#170;transform:scaleX(1.200)">&gt;</i></div>
<div class="cl" style="top:649.25px"><span class="ln">37</span><i style="left:94.19px;color:#170;transform:scaleX(1.200)">&lt;</i><i style="left:106.16px;color:#170;transform:scaleX(1.120)">/</i><i style="left:112.90px;color:#f00;transform:scaleX(1.200)">#</i><i style="left:123.30px;color:#f00;transform:scaleX(1.242)">if</i><i style="left:132.82px;color:#f00;transform:scaleX(1.200)">&gt;</i></div>
<div class="cl" style="top:666.25px"><span class="ln">38</span><i style="left:75.51px;color:#000;transform:scaleX(1.120)">{</i><i style="left:83.91px;color:#000;transform:scaleX(1.120)">/</i><i style="left:89.60px;color:#000;transform:scaleX(1.109)">ms</i><i style="left:111.23px;color:#000;transform:scaleX(1.120)">:</i><i style="left:116.52px;color:#000;transform:scaleX(1.106)">channel</i><i style="left:172.61px;color:#000;transform:scaleX(1.120)">}</i></div>
<div class="cl" style="top:683.25px"><span class="ln">39</span><i style="left:74.50px;color:#170;transform:scaleX(1.200)">&lt;</i><i style="left:86.19px;color:#170;transform:scaleX(1.200)">#</i><i style="left:96.59px;color:#170;transform:scaleX(1.073)">else</i><i style="left:124.97px;color:#170;transform:scaleX(1.200)">&gt;</i></div>
<div class="cl" style="top:700.25px"><span class="ln">40</span><i style="left:75.51px;color:#000;transform:scaleX(1.120)">{</i><i style="left:82.58px;color:#000;transform:scaleX(1.109)">ms</i><i style="left:104.20px;color:#000;transform:scaleX(1.120)">:</i><i style="left:109.49px;color:#000;transform:scaleX(1.106)">channel</i><i style="left:168.67px;color:#000;transform:scaleX(1.151)">type</i><i style="left:199.96px;color:#000;transform:scaleX(1.200)">=</i><i style="left:210.88px;color:#000;transform:scaleX(1.200)">&#x27;</i><i style="left:214.36px;color:#000;transform:scaleX(1.081)">son</i><i style="left:239.05px;color:#000;transform:scaleX(1.200)">&#x27;</i><i style="left:244.36px;color:#000;transform:scaleX(1.120)">}</i></div>
<div class="cl" style="top:717.25px"><span class="ln">41</span><i style="left:94.19px;color:#170;transform:scaleX(1.200)">&lt;</i><i style="left:105.88px;color:#170;transform:scaleX(1.200)">#</i><i style="left:116.28px;color:#170;transform:scaleX(1.242)">if</i><i style="left:129.89px;color:#00c;transform:scaleX(1.146)">field</i><i style="left:159.55px;color:#00c;transform:scaleX(1.200)">.</i><i style="left:164.43px;color:#00c;transform:scaleX(1.149)">typeid</i><i style="left:213.10px;color:#333;transform:scaleX(1.200)">=</i><i style="left:224.56px;color:#f00;transform:scaleX(1.200)">=</i><i style="left:240.12px;color:#00c;transform:scaleX(1.149)">typeid</i><i style="left:289.12px;color:#00c;transform:scaleX(1.120)">|</i><i style="left:295.51px;color:#00c;transform:scaleX(1.120)">|</i><i style="left:306.34px;color:#00c;transform:scaleX(1.200)">(</i><i style="left:312.62px;color:#00c;transform:scaleX(1.096)">ids</i><i style="left:332.23px;color:#00c;transform:scaleX(0.981)">?</i><i style="left:339.87px;color:#00c;transform:scaleX(1.080)">has</i><i style="left:364.24px;color:#00c;transform:scaleX(1.143)">_</i><i style="left:373.14px;color:#00c;transform:scaleX(1.147)">content</i><i style="left:430.72px;color:#00c;transform:scaleX(1.089)">&amp;</i><i style="left:440.89px;color:#00c;transform:scaleX(1.089)">&amp;</i><i style="left:455.99px;color:#00c;transform:scaleX(1.096)">ids</i><i style="left:475.60px;color:#00c;transform:scaleX(0.981)">?</i><i style="left:483.24px;color:#00c;transform:scaleX(1.163)">split</i><i style="left:512.88px;color:#00c;transform:scaleX(1.200)">(</i><i style="left:519.39px;color:#f00;transform:scaleX(1.200)">&quot;</i><i style="left:525.80px;color:#f00;transform:scaleX(1.200)">,</i><i style="left:530.91px;color:#f00;transform:scaleX(1.200)">&quot;</i><i style="left:537.79px;color:#00c;transform:scaleX(1.200)">)</i><i style="left:544.06px;color:#00c;transform:scaleX(0.981)">?</i><i style="left:551.70px;color:#00c;transform:scaleX(1.066)">seq</i><i style="left:575.75px;color:#00c;transform:scaleX(1.143)">_</i><i style="left:584.65px;color:#00c;transform:scaleX(1.117)">contains</i><i style="left:643.60px;color:#00c;transform:scaleX(1.200)">(</i><i style="left:649.88px;color:#00c;transform:scaleX(1.146)">field</i><i style="left:679.53px;color:#00c;transform:scaleX(1.200)">.</i><i style="left:684.41px;color:#00c;transform:scaleX(1.149)">typeid</i><i style="left:727.55px;color:#00c;transform:scaleX(1.200)">.</i><i style="left:732.43px;color:#00c;transform:scaleX(1.163)">toString</i><i style="left:789.22px;color:#00c;transform:scaleX(1.200)">(</i><i style="left:796.18px;color:#00c;transform:scaleX(1.200)">)</i><i style="left:803.14px;color:#00c;transform:scaleX(1.200)">)</i><i style="left:810.10px;color:#00c;transform:scaleX(1.200)">)</i><i style="left:817.20px;color:#170;transform:scaleX(1.200)">&gt;</i></div>
<div class="cl" style="top:734.25px"><span class="ln">42</span><i style="left:94.19px;color:#170;transform:scaleX(1.200)">&lt;</i><i style="left:104.82px;color:#170;transform:scaleX(1.079)">a</i><i style="left:118.14px;color:#00c;transform:scaleX(1.150)">href</i><i style="left:146.71px;color:#333;transform:scaleX(1.200)">=</i><i style="left:157.62px;color:#a11;transform:scaleX(1.200)">&#x27;</i><i style="left:161.92px;color:#a11;transform:scaleX(1.200)">&lt;</i><i style="left:173.61px;color:#a11;transform:scaleX(1.200)">#</i><i style="left:184.01px;color:#a11;transform:scaleX(1.242)">if</i><i style="left:197.63px;color:#a11;transform:scaleX(1.146)">field</i><i style="left:227.29px;color:#a11;transform:scaleX(1.200)">.</i><i style="left:232.17px;color:#a11;transform:scaleX(1.151)">type</i><i style="left:263.46px;color:#a11;transform:scaleX(1.200)">=</i><i style="left:274.91px;color:#a11;transform:scaleX(1.200)">=</i><i style="left:285.55px;color:#a11;transform:scaleX(1.143)">3</i><i style="left:295.27px;color:#a11;transform:scaleX(1.200)">&gt;</i><i style="left:307.74px;color:#a11;transform:scaleX(1.120)">{</i><i style="left:314.81px;color:#a11;transform:scaleX(1.109)">ms</i><i style="left:336.43px;color:#a11;transform:scaleX(1.120)">:</i><i style="left:341.72px;color:#a11;transform:scaleX(1.118)">global</i><i style="left:383.70px;color:#a11;transform:scaleX(1.200)">.</i><i style="left:388.58px;color:#a11;transform:scaleX(1.199)">html</i><i style="left:421.63px;color:#a11;transform:scaleX(1.120)">/</i><i style="left:429.16px;color:#a11;transform:scaleX(1.120)">}</i><i style="left:436.23px;color:#a11;transform:scaleX(1.143)">$</i><i style="left:446.96px;color:#a11;transform:scaleX(1.120)">{</i><i style="left:454.03px;color:#a11;transform:scaleX(1.146)">field</i><i style="left:483.68px;color:#a11;transform:scaleX(1.200)">.</i><i style="left:488.56px;color:#a11;transform:scaleX(1.164)">typeurl</i><i style="left:539.30px;color:#a11;transform:scaleX(1.120)">}</i><i style="left:547.20px;color:#a11;transform:scaleX(1.200)">&lt;</i><i style="left:558.89px;color:#a11;transform:scaleX(1.200)">#</i><i style="left:569.29px;color:#a11;transform:scaleX(1.073)">else</i><i style="left:597.67px;color:#a11;transform:scaleX(1.200)">&gt;</i><i style="left:610.14px;color:#a11;transform:scaleX(1.120)">{</i><i style="left:617.21px;color:#a11;transform:scaleX(1.109)">ms</i><i style="left:638.84px;color:#a11;transform:scaleX(1.120)">:</i><i style="left:644.12px;color:#a11;transform:scaleX(1.118)">global</i><i style="left:686.10px;color:#a11;transform:scaleX(1.200)">.</i><i style="left:690.98px;color:#a11;transform:scaleX(1.199)">html</i><i style="left:724.03px;color:#a11;transform:scaleX(1.120)">/</i><i style="left:731.56px;color:#a11;transform:scaleX(1.120)">}</i><i style="left:738.63px;color:#a11;transform:scaleX(1.143)">$</i><i style="left:749.36px;color:#a11;transform:scaleX(1.120)">{</i><i style="left:756.43px;color:#a11;transform:scaleX(1.146)">field</i><i style="left:786.08px;color:#a11;transform:scaleX(1.200)">.</i><i style="left:790.96px;color:#a11;transform:scaleX(1.159)">typelink</i><i style="left:847.82px;color:#a11;transform:scaleX(1.120)">}</i><i style="left:855.71px;color:#a11;transform:scaleX(1.200)">&lt;</i><i style="left:867.68px;color:#a11;transform:scaleX(1.120)">/</i><i style="left:874.43px;color:#a11;transform:scaleX(1.200)">#</i><i style="left:884.83px;color:#a11;transform:scaleX(1.242)">if</i><i style="left:894.35px;color:#a11;transform:scaleX(1.200)">&gt;</i><i style="left:905.26px;color:#a11;transform:scaleX(1.200)">&#x27;</i><i style="left:913.66px;color:#00c;transform:scaleX(1.060)">class</i><i style="left:948.31px;color:#333;transform:scaleX(1.200)">=</i><i style="left:959.22px;color:#a11;transform:scaleX(1.200)">&#x27;</i><i style="left:962.70px;color:#a11;transform:scaleX(1.067)">csel</i><i style="left:989.54px;color:#a11;transform:scaleX(1.200)">&#x27;</i><i style="left:993.84px;color:#170;transform:scaleX(1.200)">&gt;</i><i style="left:1004.48px;color:#000;transform:scaleX(1.143)">$</i><i style="left:1015.21px;color:#000;transform:scaleX(1.120)">{</i><i style="left:1022.28px;color:#000;transform:scaleX(1.146)">field</i><i style="left:1051.93px;color:#000;transform:scaleX(1.200)">.</i><i style="left:1056.81px;color:#000;transform:scaleX(1.191)">typetitle</i><i style="left:1116.10px;color:#000;transform:scaleX(1.120)">}</i><i style="left:1123.99px;color:#170;transform:scaleX(1.200)">&lt;</i><i style="left:1135.96px;color:#170;transform:scaleX(1.120)">/</i><i style="left:1141.65px;color:#170;transform:scaleX(1.079)">a</i><i style="left:1150.88px;color:#170;transform:scaleX(1.200)">&gt;</i></div>
<div class="cl" style="top:751.25px"><span class="ln">43</span><i style="left:94.19px;color:#170;transform:scaleX(1.200)">&lt;</i><i style="left:105.88px;color:#170;transform:scaleX(1.200)">#</i><i style="left:116.28px;color:#170;transform:scaleX(1.073)">else</i><i style="left:144.66px;color:#170;transform:scaleX(1.200)">&gt;</i></div>
<div class="cl" style="top:768.25px"><span class="ln">44</span><i style="left:94.19px;color:#170;transform:scaleX(1.200)">&lt;</i><i style="left:104.82px;color:#170;transform:scaleX(1.079)">a</i><i style="left:118.14px;color:#00c;transform:scaleX(1.150)">href</i><i style="left:146.71px;color:#333;transform:scaleX(1.200)">=</i><i style="left:157.57px;color:#a11;transform:scaleX(1.200)">&quot;</i><i style="left:164.59px;color:#a11;transform:scaleX(1.200)">&lt;</i><i style="left:176.28px;color:#a11;transform:scaleX(1.200)">#</i><i style="left:186.68px;color:#a11;transform:scaleX(1.242)">if</i><i style="left:200.30px;color:#a11;transform:scaleX(1.146)">field</i><i style="left:229.95px;color:#a11;transform:scaleX(1.200)">.</i><i style="left:234.83px;color:#a11;transform:scaleX(1.151)">type</i><i style="left:266.12px;color:#a11;transform:scaleX(1.200)">=</i><i style="left:277.58px;color:#a11;transform:scaleX(1.200)">=</i><i style="left:288.21px;color:#a11;transform:scaleX(1.143)">3</i><i style="left:297.94px;color:#a11;transform:scaleX(1.200)">&gt;</i><i style="left:310.40px;color:#a11;transform:scaleX(1.120)">{</i><i style="left:317.47px;color:#a11;transform:scaleX(1.109)">ms</i><i style="left:339.10px;color:#a11;transform:scaleX(1.120)">:</i><i style="left:344.38px;color:#a11;transform:scaleX(1.118)">global</i><i style="left:386.37px;color:#a11;transform:scaleX(1.200)">.</i><i style="left:391.25px;color:#a11;transform:scaleX(1.199)">html</i><i style="left:424.30px;color:#a11;transform:scaleX(1.120)">/</i><i style="left:431.82px;color:#a11;transform:scaleX(1.120)">}</i><i style="left:438.89px;color:#a11;transform:scaleX(1.143)">$</i><i style="left:449.62px;color:#a11;transform:scaleX(1.120)">{</i><i style="left:456.69px;color:#a11;transform:scaleX(1.146)">field</i><i style="left:486.35px;color:#a11;transform:scaleX(1.200)">.</i><i style="left:491.23px;color:#a11;transform:scaleX(1.164)">typeurl</i><i style="left:541.97px;color:#a11;transform:scaleX(1.120)">}</i><i style="left:549.86px;color:#a11;transform:scaleX(1.200)">&lt;</i><i style="left:561.55px;color:#a11;transform:scaleX(1.200)">#</i><i style="left:571.95px;color:#a11;transform:scaleX(1.073)">else</i><i style="left:600.34px;color:#a11;transform:scaleX(1.200)">&gt;</i><i style="left:612.80px;color:#a11;transform:scaleX(1.120)">{</i><i style="left:619.87px;color:#a11;transform:scaleX(1.109)">ms</i><i style="left:641.50px;color:#a11;transform:scaleX(1.120)">:</i><i style="left:646.79px;color:#a11;transform:scaleX(1.118)">global</i><i style="left:688.77px;color:#a11;transform:scaleX(1.200)">.</i><i style="left:693.65px;color:#a11;transform:scaleX(1.199)">html</i><i style="left:726.70px;color:#a11;transform:scaleX(1.120)">/</i><i style="left:734.22px;color:#a11;transform:scaleX(1.120)">}</i><i style="left:741.29px;color:#a11;transform:scaleX(1.143)">$</i><i style="left:752.03px;color:#a11;transform:scaleX(1.120)">{</i><i style="left:759.09px;color:#a11;transform:scaleX(1.146)">field</i><i style="left:788.75px;color:#a11;transform:scaleX(1.200)">.</i><i style="left:793.63px;color:#a11;transform:scaleX(1.159)">typelink</i><i style="left:850.48px;color:#a11;transform:scaleX(1.120)">}</i><i style="left:858.38px;color:#a11;transform:scaleX(1.200)">&lt;</i><i style="left:870.34px;color:#a11;transform:scaleX(1.120)">/</i><i style="left:877.09px;color:#a11;transform:scaleX(1.200)">#</i><i style="left:887.49px;color:#a11;transform:scaleX(1.242)">if</i><i style="left:897.01px;color:#a11;transform:scaleX(1.200)">&gt;</i><i style="left:907.88px;color:#a11;transform:scaleX(1.200)">&quot;</i><i style="left:914.89px;color:#170;transform:scaleX(1.200)">&gt;</i><i style="left:925.53px;color:#000;transform:scaleX(1.143)">$</i><i style="left:936.26px;color:#000;transform:scaleX(1.120)">{</i><i style="left:943.33px;color:#000;transform:scaleX(1.146)">field</i><i style="left:972.98px;color:#000;transform:scaleX(1.200)">.</i><i style="left:977.86px;color:#000;transform:scaleX(1.191)">typetitle</i><i style="left:1037.15px;color:#000;transform:scaleX(1.120)">}</i><i style="left:1045.04px;color:#170;transform:scaleX(1.200)">&lt;</i><i style="left:1057.01px;color:#170;transform:scaleX(1.120)">/</i><i style="left:1062.71px;color:#170;transform:scaleX(1.079)">a</i><i style="left:1071.93px;color:#170;transform:scaleX(1.200)">&gt;</i></div>
<div class="cl" style="top:785.25px"><span class="ln">45</span><i style="left:94.19px;color:#170;transform:scaleX(1.200)">&lt;</i><i style="left:106.16px;color:#170;transform:scaleX(1.120)">/</i><i style="left:112.90px;color:#f00;transform:scaleX(1.200)">#</i><i style="left:123.30px;color:#f00;transform:scaleX(1.242)">if</i><i style="left:132.82px;color:#f00;transform:scaleX(1.200)">&gt;</i></div>
 </div>
</div>
</body></html>
